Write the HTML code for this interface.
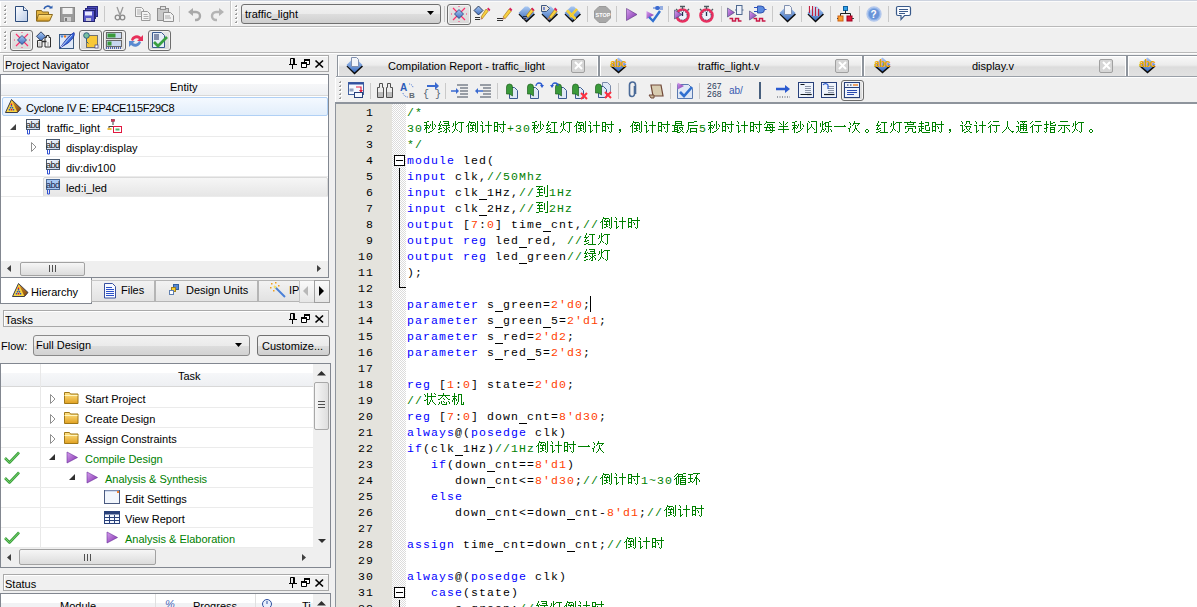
<!DOCTYPE html>
<html><head><meta charset="utf-8">
<style>
*{margin:0;padding:0;box-sizing:border-box}
html,body{width:1197px;height:607px;overflow:hidden;background:#f0f0f0;font-family:"Liberation Sans",sans-serif;font-size:11px;color:#000}
#root{position:relative;width:1197px;height:607px;overflow:hidden}
.a{position:absolute}
svg.a{overflow:visible}
.t{position:absolute;white-space:nowrap;line-height:13px}
.hdr{position:absolute;border:1px solid #a9a9a9;background:#f0f0f0;height:17px;box-shadow:inset 1px 1px 0 #fff}
.hdr span{position:absolute;left:1px;top:3px;line-height:13px}
.frame{position:absolute;border:1px solid #828790;background:#fff}
.sep{position:absolute;width:2px;border-left:1px solid #c8c8c8;border-right:1px solid #fff}
.grip{position:absolute;width:3px;background:radial-gradient(circle at 1px 1px,#9a9a9a 0.9px,transparent 1px);background-size:3px 4px}
.pb{position:absolute;border:1px solid #6d6d6d;border-radius:3px;background:linear-gradient(#e6e6e6,#d9d9d9);box-shadow:inset 0 0 0 1px #f4f4f4}
.row{position:absolute;height:20px;border-bottom:1px solid #ebebeb}
.ed b{position:absolute;font-weight:normal;font-family:"Liberation Mono",monospace;font-size:11.5px;letter-spacing:1.1px;line-height:16px;height:16px;white-space:pre;margin-top:0.5px}
.ed svg{position:absolute;width:14px;height:16px;fill:currentColor}
.ed i{position:absolute;left:336px;width:38px;text-align:right;font-style:normal;font-family:"Liberation Mono",monospace;font-size:11.5px;letter-spacing:1.1px;line-height:16px;height:16px;margin-top:0.5px}
.ed s{position:absolute;width:8px;height:1px;margin-top:15px;background:currentColor;text-decoration:none}
.k{color:#0000ff}.n{color:#ff4000}.c{color:#008000}.p{color:#000}
.tab{position:absolute;top:55px;height:21px;border-top:1px solid #8e949c;background:linear-gradient(#f8f8f8 0,#ececec 45%,#dcdcdc 55%,#e2e2e2 100%);box-shadow:inset 1px 1px 0 #fff,inset -1px 0 0 #fff}
.tab .x{position:absolute;top:3px;width:14px;height:14px;border:1px solid #a0a0a0;border-radius:2px;background:#d6d6d6}
.hs{position:absolute;height:16px;background:#efefef}
.thumb{position:absolute;top:1px;height:14px;border:1px solid #a2a2a2;border-radius:2px;background:linear-gradient(#f6f6f6,#dcdcdc)}
.gr{color:#008000}
</style></head><body><div id="root">
<svg width="0" height="0" style="position:absolute"><defs>
<linearGradient id="gdoc" x1="0" y1="0" x2="1" y2="1"><stop offset="0" stop-color="#ffffff"/><stop offset="1" stop-color="#b9cbe8"/></linearGradient>
<linearGradient id="gfold" x1="0" y1="0" x2="0" y2="1"><stop offset="0" stop-color="#ffe48a"/><stop offset="1" stop-color="#e0a020"/></linearGradient>
<linearGradient id="gdia" x1="0" y1="0" x2="0" y2="1"><stop offset="0" stop-color="#a9c8f2"/><stop offset="1" stop-color="#3f6fc0"/></linearGradient>
<linearGradient id="gpur" x1="0" y1="0" x2="1" y2="1"><stop offset="0" stop-color="#d9a0f0"/><stop offset="1" stop-color="#7a2ca8"/></linearGradient>
<linearGradient id="gbtn" x1="0" y1="0" x2="0" y2="1"><stop offset="0" stop-color="#f7f7f7"/><stop offset="1" stop-color="#d8d8d8"/></linearGradient>
<g id="i-xdia"><g stroke="#ff3070" stroke-width="1.2" fill="none"><path d="M2 2L7 7M14 2L9 7M2 14L7 9M14 14L9 9"/></g><g fill="#ff3070"><rect x="7.5" y="0" width="1" height="1"/><rect x="7.5" y="15" width="1" height="1"/><rect x="0" y="7.5" width="1" height="1"/><rect x="15" y="7.5" width="1" height="1"/></g><path d="M8 3.5L12.5 8L8 12.5L3.5 8Z" fill="url(#gdia)" stroke="#1e3c78" stroke-width="0.8"/></g>
<g id="i-bino"><path d="M3 1h3v4h1v9H1V5h2zM10 1h3v4h2v9H9V5h1z" fill="#e8e8e8" stroke="#404040" stroke-width="1"/><rect x="1.5" y="9" width="5" height="4.5" fill="#bdbdbd"/><rect x="9.5" y="9" width="5" height="4.5" fill="#bdbdbd"/></g>
<g id="i-abc"><path d="M8.5 2.5L16.5 9.5L8.5 16.5L0.5 9.5Z" fill="#0a0a0a"/><path d="M8.5 0.5L16.5 7.5L8.5 14.5L0.5 7.5Z" fill="url(#gdia)"/><text x="0.3" y="10" font-family="Liberation Sans" font-size="10" font-weight="bold" fill="#f5a800" letter-spacing="-0.45">abc</text></g>
<linearGradient id="gabd" x1="0" y1="0" x2="1" y2="1"><stop offset="0" stop-color="#ffffff"/><stop offset="1" stop-color="#c4d4f0"/></linearGradient><g id="i-abd"><rect x="0.5" y="0.5" width="13" height="10" fill="url(#gabd)" stroke="#4a5a70"/><text x="0" y="9" font-family="Liberation Sans" font-size="9" fill="#1a1a1a" letter-spacing="-0.5">abd</text><path d="M1.5 11v4h2v-4" fill="none" stroke="#3050d0"/></g>
<g id="i-close"><path d="M1 1L8 8M8 1L1 8" stroke="#000" stroke-width="1.6"/></g>
<g id="i-pin"><path d="M2 0.5h5M2.5 0.5v5.5h4V0.5M1 6.5h7M4.5 7v4" fill="none" stroke="#000" stroke-width="1"/></g>
<g id="i-rest"><path d="M3.5 0.5h6v5h-6zM0.5 3.5h6v5h-6z" fill="#fff" stroke="#000" stroke-width="1"/><path d="M3.5 1.5h6M0.5 4.5h6" stroke="#000" stroke-width="1.2"/></g>
<g id="i-fold"><path d="M0.5 2.5h5l1 1.5h7.5v9.5H0.5z" fill="url(#gfold)" stroke="#a07818"/><path d="M0.5 5.5h13" stroke="#fff6c0"/></g>
<g id="i-play"><path d="M1 1L11.5 6.5L1 12Z" fill="url(#gpur)" stroke="#6a2c9a" stroke-width="0.6"/></g>
<g id="i-chk"><path d="M1 8L5.5 12.5L15 2.5" fill="none" stroke="#3aa040" stroke-width="2.6" stroke-linejoin="round"/><path d="M1 8L5.5 12.5L15 2.5" fill="none" stroke="#7ed36a" stroke-width="1"/></g>
</defs></svg>

<!-- toolbar rows backgrounds -->
<div class="a" style="left:0;top:0;width:1197px;height:1px;background:#cdd3df"></div>
<div class="a" style="left:0;top:1px;width:1197px;height:1px;background:#fbfbfb"></div>
<div class="a" style="left:0;top:26px;width:1197px;height:1px;background:#b9b9b9"></div>
<div class="a" style="left:0;top:27px;width:1197px;height:1px;background:#fdfdfd"></div>
<div class="a" style="left:0;top:52px;width:1197px;height:1px;background:#b9b9b9"></div>
<div class="a" style="left:0;top:53px;width:1197px;height:1px;background:#fdfdfd"></div>
<div class="a" style="left:0;top:1px;width:1px;height:25px;background:#fff"></div>
<div class="a" style="left:0;top:28px;width:1px;height:24px;background:#fff"></div>

<!-- row 1 -->
<svg class="a" style="left:4px;top:5px" width="3" height="20" shape-rendering="crispEdges"><rect x="1" y="0" width="1" height="1" fill="#a6a6a6"/><rect x="0" y="1" width="2" height="1" fill="#9a9a9a"/><rect x="2" y="1" width="1" height="2" fill="#fff"/><rect x="0" y="2" width="2" height="1" fill="#fff"/><rect x="1" y="4" width="1" height="1" fill="#a6a6a6"/><rect x="0" y="5" width="2" height="1" fill="#9a9a9a"/><rect x="2" y="5" width="1" height="2" fill="#fff"/><rect x="0" y="6" width="2" height="1" fill="#fff"/><rect x="1" y="8" width="1" height="1" fill="#a6a6a6"/><rect x="0" y="9" width="2" height="1" fill="#9a9a9a"/><rect x="2" y="9" width="1" height="2" fill="#fff"/><rect x="0" y="10" width="2" height="1" fill="#fff"/><rect x="1" y="12" width="1" height="1" fill="#a6a6a6"/><rect x="0" y="13" width="2" height="1" fill="#9a9a9a"/><rect x="2" y="13" width="1" height="2" fill="#fff"/><rect x="0" y="14" width="2" height="1" fill="#fff"/><rect x="1" y="16" width="1" height="1" fill="#a6a6a6"/><rect x="0" y="17" width="2" height="1" fill="#9a9a9a"/><rect x="2" y="17" width="1" height="2" fill="#fff"/><rect x="0" y="18" width="2" height="1" fill="#fff"/></svg>
<svg class="a" style="left:15px;top:6px" width="13" height="16"><path d="M0.5 0.5h8l4 4v11h-12z" fill="url(#gdoc)" stroke="#2b4a7a"/><path d="M8.5 0.5v4h4" fill="#e8eef8" stroke="#2b4a7a"/></svg>
<svg class="a" style="left:36px;top:5px" width="17" height="17"><path d="M0.5 5.5h5l1 1.5h6v9h-12z" fill="#e3b440" stroke="#8a6a20"/><path d="M2.5 9.5h14l-3 6.5h-13z" fill="url(#gfold)" stroke="#8a6a20"/><path d="M8 4C9 1 13 0 15 3" fill="none" stroke="#2f5fb0" stroke-width="1.6"/><path d="M13 3.5h3.5v-3z" fill="#2f5fb0"/></svg>
<svg class="a" style="left:60px;top:7px" width="15" height="15"><rect x="0.5" y="0.5" width="14" height="14" fill="#9a9a9a" stroke="#8a8a8a"/><rect x="2.5" y="1" width="10" height="6" fill="#f2f2f2"/><rect x="4" y="10" width="7" height="4.5" fill="#d0d0d0"/><rect x="5" y="11" width="2" height="3" fill="#7a7a7a"/></svg>
<svg class="a" style="left:83px;top:6px" width="15" height="16"><rect x="4.5" y="0.5" width="10" height="10" fill="#4a4ab8" stroke="#2a2a80"/><rect x="2.5" y="2.5" width="10" height="10" fill="#5050c0" stroke="#2a2a80"/><rect x="0.5" y="4.5" width="11" height="11" fill="#5656c8" stroke="#24246e"/><rect x="2" y="5.5" width="7" height="4" fill="#e8e8ff"/><rect x="3" y="12" width="5" height="3" fill="#c8c8d8"/></svg>
<div class="a" style="left:104px;top:6px;width:1px;height:16px;background:#c9c9c9"></div>
<svg class="a" style="left:114px;top:6px" width="12" height="15"><path d="M3 1L6 9M9 1L6 9" stroke="#9a9a9a" stroke-width="1.3"/><circle cx="3.5" cy="11.5" r="2.3" fill="none" stroke="#8a8a8a" stroke-width="1.3"/><circle cx="8.5" cy="11.5" r="2.3" fill="none" stroke="#8a8a8a" stroke-width="1.3"/></svg>
<svg class="a" style="left:135px;top:7px" width="16" height="14"><path d="M0.5 0.5h6l2 2v7h-8z" fill="#f4f4f4" stroke="#9a9a9a"/><path d="M6.5 4.5h6l2.5 2.5v6.5h-8.5z" fill="#f4f4f4" stroke="#9a9a9a"/><path d="M8.5 7.5h4M8.5 9.5h5M8.5 11.5h5M2 3h4M2 5h4M2 7h4" stroke="#b0b0b0"/></svg>
<svg class="a" style="left:157px;top:6px" width="17" height="16"><rect x="0.5" y="2.5" width="11" height="12" fill="#c8c8c8" stroke="#909090"/><rect x="3.5" y="0.5" width="5" height="3" fill="#e0e0e0" stroke="#909090"/><path d="M6.5 6.5h7l3 3v6h-10z" fill="#f2f2f2" stroke="#909090"/><path d="M8 10h5M8 12h6" stroke="#a8a8a8"/></svg>
<div class="a" style="left:179px;top:6px;width:1px;height:16px;background:#c9c9c9"></div>
<svg class="a" style="left:188px;top:8px" width="13" height="13"><path d="M3 4h5a4 4 0 0 1 0 8h-1" fill="none" stroke="#a9a9a9" stroke-width="2.4"/><path d="M0 4L5 0v8z" fill="#a9a9a9"/></svg>
<svg class="a" style="left:211px;top:8px" width="13" height="13"><path d="M10 4H5a4 4 0 0 0 0 8h1" fill="none" stroke="#b4b4b4" stroke-width="2.4"/><path d="M13 4L8 0v8z" fill="#b4b4b4"/></svg>
<div class="a" style="left:230px;top:1px;width:1px;height:25px;background:#c8c8c8"></div>
<div class="a" style="left:231px;top:1px;width:1px;height:25px;background:#fff"></div>
<svg class="a" style="left:235px;top:5px" width="3" height="20" shape-rendering="crispEdges"><rect x="1" y="0" width="1" height="1" fill="#a6a6a6"/><rect x="0" y="1" width="2" height="1" fill="#9a9a9a"/><rect x="2" y="1" width="1" height="2" fill="#fff"/><rect x="0" y="2" width="2" height="1" fill="#fff"/><rect x="1" y="4" width="1" height="1" fill="#a6a6a6"/><rect x="0" y="5" width="2" height="1" fill="#9a9a9a"/><rect x="2" y="5" width="1" height="2" fill="#fff"/><rect x="0" y="6" width="2" height="1" fill="#fff"/><rect x="1" y="8" width="1" height="1" fill="#a6a6a6"/><rect x="0" y="9" width="2" height="1" fill="#9a9a9a"/><rect x="2" y="9" width="1" height="2" fill="#fff"/><rect x="0" y="10" width="2" height="1" fill="#fff"/><rect x="1" y="12" width="1" height="1" fill="#a6a6a6"/><rect x="0" y="13" width="2" height="1" fill="#9a9a9a"/><rect x="2" y="13" width="1" height="2" fill="#fff"/><rect x="0" y="14" width="2" height="1" fill="#fff"/><rect x="1" y="16" width="1" height="1" fill="#a6a6a6"/><rect x="0" y="17" width="2" height="1" fill="#9a9a9a"/><rect x="2" y="17" width="1" height="2" fill="#fff"/><rect x="0" y="18" width="2" height="1" fill="#fff"/></svg>
<div class="a" style="left:241px;top:4px;width:200px;height:20px;border:1px solid #707070;border-radius:3px;background:linear-gradient(#f2f2f2 0,#ebebeb 50%,#dddddd 51%,#cfcfcf 100%)"></div>
<div class="t" style="left:245px;top:8px">traffic_light</div>
<svg class="a" style="left:427px;top:11px" width="8" height="5"><path d="M0 0h7L3.5 4z" fill="#000"/></svg>
<div class="a" style="left:444px;top:6px;width:1px;height:16px;background:#c9c9c9"></div>
<div class="pb" style="left:447px;top:4px;width:24px;height:21px"></div>
<svg class="a" style="left:451px;top:6px" width="16" height="16"><use href="#i-xdia"/></svg>
<svg class="a" style="left:473px;top:5px" width="18" height="18"><path d="M5.5 1L10 5.5L5.5 10L1 5.5Z" fill="url(#gdia)" stroke="#102040" stroke-width="0.8"/><path d="M2 12.5h5M2 14.5h5" stroke="#303030" stroke-width="1"/><path d="M8 12L13 4l2.2 2.2-6 7.5z" fill="#f8d040" stroke="#a07010" stroke-width="0.6"/><path d="M14 4l1.2-1.5 2.2 2.2-1.2 1.5z" fill="#d8205a"/><path d="M8 12l2.2 1.7-2.7 1z" fill="#c08060"/></svg>
<svg class="a" style="left:496px;top:5px" width="18" height="18"><path d="M1 13.5h6M1 15.5h6" stroke="#303030" stroke-width="1"/><path d="M7 12L13 4l2.2 2.2-6 7.5z" fill="#f8d040" stroke="#a07010" stroke-width="0.6"/><path d="M13 4l1.2-1.5 2.2 2.2-1.2 1.5z" fill="#d8205a"/><path d="M7 12l2.2 1.7-2.7 1z" fill="#c08060"/></svg>
<svg class="a" style="left:518px;top:5px" width="18" height="18"><path d="M0.5 9.5L7 3h3l7 6.5L8.5 17.5Z" fill="#0a0a0a"/><path d="M0.5 8L7 1.5h3L16.5 8L8.5 15.5Z" fill="url(#gdia)"/><path d="M7 12L13 4l2.2 2.2-6 7.5z" fill="#f8d040" stroke="#a07010" stroke-width="0.6" transform="translate(1,-1)"/><path d="M13 4l1.2-1.5 2.2 2.2-1.2 1.5z" fill="#d8205a"/><path d="M7 12l2.2 1.7-2.7 1z" fill="#c08060"/><path d="M5 11.5h4M4 13.5h4" stroke="#203050"/></svg>
<svg class="a" style="left:541px;top:5px" width="18" height="18"><path d="M0.5 9.5L7 3h3l7 6.5L8.5 17.5Z" fill="#0a0a0a"/><path d="M0.5 8L7 1.5h3L16.5 8L8.5 15.5Z" fill="url(#gdia)"/><path d="M0.5 0.5h5l3 3-3 3h-5z" fill="#e8e4dc" stroke="#405880"/><path d="M3 2v3" stroke="#3050c0" stroke-width="1.2"/><path d="M7 12L13 4l2.2 2.2-6 7.5z" fill="#f8d040" stroke="#a07010" stroke-width="0.6" transform="translate(1,0)"/><path d="M13 4l1.2-1.5 2.2 2.2-1.2 1.5z" fill="#d8205a"/><path d="M7 12l2.2 1.7-2.7 1z" fill="#c08060"/></svg>
<svg class="a" style="left:564px;top:5px" width="18" height="18"><path d="M0.5 9.5L7 3h3l7 6.5L8.5 17.5Z" fill="#0a0a0a"/><path d="M0.5 8L7 1.5h3L16.5 8L8.5 15.5Z" fill="url(#gdia)"/><path d="M3 5.5L11.5 14M6 12L13 4" stroke="#f8d838" stroke-width="2.6"/><path d="M3 5.5L11.5 14M6 12L13 4" stroke="#e09020" stroke-width="0.6" stroke-dasharray="1 1"/></svg>
<div class="a" style="left:587px;top:6px;width:1px;height:16px;background:#c9c9c9"></div>
<svg class="a" style="left:594px;top:6px" width="17" height="17"><path d="M5 0.5h7l4.5 4.5v7L12 16.5H5L0.5 12V5z" fill="#a8a8a8" stroke="#9a9a9a"/><text x="1.5" y="11" font-family="Liberation Sans" font-size="5.5" font-weight="bold" fill="#fff">STOP</text></svg>
<div class="a" style="left:616px;top:6px;width:1px;height:16px;background:#c9c9c9"></div>
<svg class="a" style="left:626px;top:8px" width="12" height="14"><path d="M0.5 0.5L11 6.5L0.5 12.5Z" fill="url(#gpur)" stroke="#5a3080" stroke-width="0.6"/></svg>
<svg class="a" style="left:646px;top:5px" width="18" height="18"><path d="M0.5 6L8 10L0.5 14Z" fill="url(#gpur)"/><path d="M3 12L7 16L14 6" fill="none" stroke="#3070d0" stroke-width="2.4"/><rect x="9" y="1" width="5" height="4" rx="2" fill="#3a6ad0"/><path d="M14 2h3M14 4h3M7 3h2" stroke="#3a6ad0"/></svg>
<div class="a" style="left:668px;top:6px;width:1px;height:16px;background:#c9c9c9"></div>
<svg class="a" style="left:674px;top:5px" width="18" height="18"><circle cx="8.5" cy="10.5" r="6" fill="#eef2fc" stroke="#e83060" stroke-width="2.6"/><circle cx="8.5" cy="10.5" r="4.5" fill="none" stroke="#203050" stroke-width="1" stroke-dasharray="0.9 1.45"/><path d="M6 1.5h5M8.5 1.5v2.5M2 4l1.5 1.5M15 4l-1.5 1.5" stroke="#505a60" stroke-width="1.3"/><path d="M8.5 7v4" stroke="#203050" stroke-width="1.3"/><path d="M0.5 5L8 9.5L0.5 14Z" fill="url(#gpur)" stroke="#404a70" stroke-width="0.6"/></svg>
<svg class="a" style="left:698px;top:5px" width="18" height="18"><circle cx="8.5" cy="10.5" r="6" fill="#eef2fc" stroke="#e83060" stroke-width="2.6"/><circle cx="8.5" cy="10.5" r="4.5" fill="none" stroke="#203050" stroke-width="1" stroke-dasharray="0.9 1.45"/><path d="M6 1.5h5M8.5 1.5v2.5M2 4l1.5 1.5M15 4l-1.5 1.5" stroke="#505a60" stroke-width="1.3"/><path d="M8.5 7v4" stroke="#203050" stroke-width="1.3"/></svg>
<div class="a" style="left:721px;top:6px;width:1px;height:16px;background:#c9c9c9"></div>
<svg class="a" style="left:727px;top:5px" width="17" height="18"><path d="M0.5 3L7.5 7.5L0.5 12Z" fill="url(#gpur)" stroke="#404a70" stroke-width="0.6"/><rect x="9.5" y="0.5" width="5.5" height="9" fill="#eef2fa" stroke="#506a90"/><path d="M8 5h1.5M15 5h1.5" stroke="#506a90"/><path d="M2.5 13.5h3v2.5h3v-2.5h3v2.5h3" fill="none" stroke="#c81848" stroke-width="1.5"/></svg>
<svg class="a" style="left:749px;top:5px" width="18" height="18"><path d="M0.5 6L7.5 10.5L0.5 15Z" fill="url(#gpur)" stroke="#404a70" stroke-width="0.6"/><path d="M8.5 1h3.5a3.5 3.5 0 0 1 0 7h-3.5z" fill="#5a8ae0" stroke="#2040a0" stroke-width="0.8"/><path d="M5 2.5h3.5M5 6.5h3.5M15.5 4.5h2" stroke="#2a50c0" stroke-width="1"/><path d="M4.5 13.5h3v2.5h3v-2.5h3v2.5h3" fill="none" stroke="#c81848" stroke-width="1.5"/></svg>
<div class="a" style="left:772px;top:6px;width:1px;height:16px;background:#c9c9c9"></div>
<svg class="a" style="left:779px;top:5px" width="18" height="18"><path d="M0.5 9.5L7 3h3l7 6.5L8.5 17.5Z" fill="#0a0a0a"/><path d="M0.5 8L7 1.5h3L16.5 8L8.5 15.5Z" fill="url(#gdia)"/><path d="M5.5 0.5h5l2 2v7h-7z" fill="#f4f6fa" stroke="#8090b0"/></svg>
<div class="a" style="left:801px;top:6px;width:1px;height:16px;background:#c9c9c9"></div>
<svg class="a" style="left:807px;top:5px" width="18" height="18"><path d="M0.5 9.5L7 3h3l7 6.5L8.5 17.5Z" fill="#0a0a0a"/><path d="M0.5 8L7 1.5h3L16.5 8L8.5 15.5Z" fill="url(#gdia)"/><path d="M2.5 1v7M5.5 1v10M8.5 2v9M11.5 4v7" stroke="#c02040" stroke-width="1.2"/><path d="M4 1v9M7 2v9M10 3v8" stroke="#ffffff" stroke-width="0.9"/></svg>
<div class="a" style="left:830px;top:6px;width:1px;height:16px;background:#c9c9c9"></div>
<svg class="a" style="left:837px;top:6px" width="17" height="16"><rect x="6.5" y="0.5" width="4" height="4" fill="#30a0e8" stroke="#1060a0"/><path d="M8.5 4.5v3M3.5 11V7.5h10V11" fill="none" stroke="#202020"/><rect x="1" y="10" width="5" height="5" fill="#f8a030" stroke="#d06010"/><rect x="10" y="10" width="5" height="5" fill="#e01838" stroke="#a00020"/><path d="M0 12.5h1M15 12.5h2" stroke="#404040"/></svg>
<div class="a" style="left:859px;top:6px;width:1px;height:16px;background:#c9c9c9"></div>
<svg class="a" style="left:866px;top:6px" width="16" height="16"><circle cx="8" cy="8" r="7" fill="#8ab0e8" stroke="#b4c8ec" stroke-width="1.4"/><circle cx="8" cy="8" r="5.2" fill="#6a94d8"/><text x="4.6" y="12" font-family="Liberation Sans" font-size="10" font-weight="bold" fill="#fff">?</text></svg>
<div class="a" style="left:888px;top:6px;width:1px;height:16px;background:#c9c9c9"></div>
<svg class="a" style="left:896px;top:6px" width="15" height="15"><path d="M2 0.5h11a1.5 1.5 0 0 1 1.5 1.5v6a1.5 1.5 0 0 1-1.5 1.5H8.5l-3.5 4v-4H2A1.5 1.5 0 0 1 0.5 8V2A1.5 1.5 0 0 1 2 0.5z" fill="#fafcff" stroke="#3a5a8a" stroke-width="1.2"/><path d="M3 3.5h9M3 5.5h9M3 7.5h6" stroke="#3a5a8a"/></svg>

<!-- row 2 -->
<svg class="a" style="left:4px;top:31px" width="3" height="20" shape-rendering="crispEdges"><rect x="1" y="0" width="1" height="1" fill="#a6a6a6"/><rect x="0" y="1" width="2" height="1" fill="#9a9a9a"/><rect x="2" y="1" width="1" height="2" fill="#fff"/><rect x="0" y="2" width="2" height="1" fill="#fff"/><rect x="1" y="4" width="1" height="1" fill="#a6a6a6"/><rect x="0" y="5" width="2" height="1" fill="#9a9a9a"/><rect x="2" y="5" width="1" height="2" fill="#fff"/><rect x="0" y="6" width="2" height="1" fill="#fff"/><rect x="1" y="8" width="1" height="1" fill="#a6a6a6"/><rect x="0" y="9" width="2" height="1" fill="#9a9a9a"/><rect x="2" y="9" width="1" height="2" fill="#fff"/><rect x="0" y="10" width="2" height="1" fill="#fff"/><rect x="1" y="12" width="1" height="1" fill="#a6a6a6"/><rect x="0" y="13" width="2" height="1" fill="#9a9a9a"/><rect x="2" y="13" width="1" height="2" fill="#fff"/><rect x="0" y="14" width="2" height="1" fill="#fff"/><rect x="1" y="16" width="1" height="1" fill="#a6a6a6"/><rect x="0" y="17" width="2" height="1" fill="#9a9a9a"/><rect x="2" y="17" width="1" height="2" fill="#fff"/><rect x="0" y="18" width="2" height="1" fill="#fff"/></svg>
<div class="pb" style="left:10px;top:30px;width:23px;height:21px"></div>
<svg class="a" style="left:14px;top:32px" width="16" height="16"><use href="#i-xdia"/></svg>
<svg class="a" style="left:35px;top:31px" width="18" height="18"><path d="M6 0.8L10.5 5.3L6 9.8L1.5 5.3Z" fill="url(#gdia)" stroke="#102040" stroke-width="0.8"/><path d="M11.5 4.5h2.5v2h1.5v9.5h-5.5V6.5h1.5z" fill="#f4f4f4" stroke="#303030"/><path d="M2.5 9.5h4.5v6.5H2.5z" fill="#f4f4f4" stroke="#303030"/><rect x="3.5" y="11" width="2" height="4" fill="#c8c8c8"/><rect x="12" y="11" width="2" height="4" fill="#c8c8c8"/><path d="M7 10.5h4.5" stroke="#303030" stroke-width="1.5"/></svg>
<svg class="a" style="left:58px;top:31px" width="18" height="18"><rect x="1.5" y="3.5" width="14" height="14" fill="#dfe8f8" stroke="#3a5a80"/><rect x="2" y="4" width="13" height="2" fill="#b8c8e4"/><rect x="3" y="4.5" width="2" height="2" fill="#4a88e0"/><rect x="6" y="4.5" width="2" height="2" fill="#f07010"/><path d="M2 17C5 13 9 6 16 1.5C17.5 4 14 9 10 12C7 14 4 15.5 2 17z" fill="#3a6ad8" stroke="#1a2a9a" stroke-width="0.8"/><path d="M3 16L14 4" stroke="#e8f0ff" stroke-width="0.8"/></svg>
<div class="pb" style="left:79px;top:30px;width:23px;height:21px"></div>
<svg class="a" style="left:83px;top:32px" width="16" height="17"><rect x="3.5" y="3.5" width="11" height="12" fill="#f8c838" stroke="#707070"/><circle cx="3.5" cy="3.5" r="2.8" fill="#78c0a0" stroke="#306080"/><path d="M3.5 6.5v3l2 2" fill="none" stroke="#306080"/><rect x="12" y="13" width="3" height="3" fill="#fff" stroke="#404080" stroke-width="0.7"/></svg>
<div class="pb" style="left:103px;top:30px;width:23px;height:21px"></div>
<svg class="a" style="left:106px;top:32px" width="17" height="17"><rect x="0.5" y="0.5" width="15" height="6" fill="#c8d8f0" stroke="#6a6a6a"/><rect x="1.5" y="1.5" width="8" height="4" fill="#3a9a3a"/><rect x="0.5" y="8.5" width="15" height="6" fill="#c8d8f0" stroke="#6a6a6a"/><rect x="1.5" y="9.5" width="4" height="4" fill="#3a9a3a"/><path d="M0 16h16" stroke="#2040a0" stroke-width="1.5" stroke-dasharray="1 1"/></svg>
<svg class="a" style="left:128px;top:33px" width="16" height="16"><path d="M3 7A6 6 0 0 1 13 4L15 2v6H9l2-2A4 4 0 0 0 5 8z" fill="#e8305a"/><path d="M13 9A6 6 0 0 1 3 12L1 14V8h6L5 10a4 4 0 0 0 6-2z" fill="#5a8ad0"/></svg>
<div class="pb" style="left:148px;top:30px;width:23px;height:21px"></div>
<svg class="a" style="left:152px;top:32px" width="16" height="17"><path d="M0.5 0.5h9l3 3v12h-12z" fill="#e6eef8" stroke="#3a5a90"/><path d="M2 3h5M2 5h5M2 7h5" stroke="#203060"/><path d="M2 10L6 14L15 5" fill="none" stroke="#38a040" stroke-width="2.8"/></svg>
<!-- Project navigator -->
<div class="hdr" style="left:3px;top:55px;width:326px"><span>Project Navigator</span></div>
<svg class="a" style="left:289px;top:58px" width="8" height="11"><path d="M1.5 0.5h4v6h-4z" fill="#e8e8e8" stroke="#000"/><path d="M0 6.5h8M3.5 7v4" stroke="#000"/><path d="M4.5 1v5" stroke="#000"/></svg>
<svg class="a" style="left:301px;top:59px" width="9" height="9"><path d="M3.5 0.5h5v5h-5z" fill="#fff" stroke="#000"/><path d="M3 1h6" stroke="#000" stroke-width="2"/><path d="M0.5 3.5h5v5h-5z" fill="#fff" stroke="#000"/><path d="M0 4h6" stroke="#000" stroke-width="2"/></svg>
<svg class="a" style="left:315px;top:60px" width="9" height="8"><path d="M0.5 0.5L8 7.5M8 0.5L0.5 7.5" stroke="#000" stroke-width="1.7"/></svg>

<div class="frame" style="left:0;top:74px;width:329px;height:204px"></div>
<div class="a" style="left:1px;top:84px;width:327px;height:11px;background:linear-gradient(#f6f7f9,#eef0f3)"></div>
<div class="a" style="left:1px;top:95px;width:327px;height:1px;background:#d8d8d8"></div>
<div class="t" style="left:170px;top:81px">Entity</div>
<!-- rows -->
<div class="a" style="left:2px;top:97px;width:326px;height:19px;border:1px solid #b0d0f5;border-radius:2px;background:linear-gradient(#f4f9ff,#e2eefb)"></div>
<svg class="a" style="left:5px;top:99px" width="17" height="15"><defs><linearGradient id="gpyr" x1="0" y1="0" x2="1" y2="1"><stop offset="0" stop-color="#f8b030"/><stop offset="1" stop-color="#7a4010"/></linearGradient></defs><path d="M6.5 0.5L16 9.5L12.5 13.5H0.5Z" fill="url(#gpyr)"/><path d="M6.5 0.5L12.5 13.5H0.5Z" fill="#f8d440"/><path d="M6.5 0.5L16 9.5L12.5 13.5H0.5Z" fill="none" stroke="#28304a" stroke-width="0.9"/><g fill="#e01030"><rect x="5.8" y="4.5" width="1.4" height="1.5"/><rect x="5.8" y="10" width="1.4" height="1.5"/></g><g fill="#2050d0"><rect x="5.8" y="6" width="1.4" height="1.5"/><rect x="4.8" y="8" width="1.4" height="1.5"/><rect x="6.8" y="8" width="1.4" height="1.5"/><rect x="3.8" y="10" width="1.4" height="1.5"/><rect x="7.8" y="10" width="1.4" height="1.5"/></g></svg>
<div class="t" style="left:26px;top:102px;letter-spacing:-0.3px">Cyclone IV E: EP4CE115F29C8</div>
<div class="a" style="left:1px;top:136px;width:327px;height:1px;background:#ebebeb"></div>
<div class="a" style="left:1px;top:156px;width:327px;height:1px;background:#ebebeb"></div>
<div class="a" style="left:1px;top:176px;width:327px;height:1px;background:#ebebeb"></div>
<div class="a" style="left:43px;top:177px;width:285px;height:20px;border:1px solid #dadada;border-radius:2px;background:linear-gradient(#f6f6f6,#e6e6e6)"></div>
<div class="a" style="left:1px;top:196px;width:327px;height:1px;background:#ebebeb"></div>
<svg class="a" style="left:10px;top:124px" width="7" height="7"><path d="M6 0V6H0z" fill="#404040"/></svg>
<svg class="a" style="left:26px;top:119px" width="15" height="17"><use href="#i-abd"/></svg>
<div class="t" style="left:47px;top:122px">traffic_light</div>
<svg class="a" style="left:107px;top:119px" width="15" height="14"><rect x="4.5" y="0.5" width="3" height="2" fill="#e03050" stroke="#802040" stroke-width="0.6"/><path d="M6 3v3M2 7.5h8M2 7v3" fill="none" stroke="#404040"/><rect x="0.5" y="9" width="4" height="2" fill="#f0c040"/><rect x="6.5" y="7.5" width="8" height="6" fill="#fff" stroke="#e01840"/><rect x="8.5" y="9.5" width="4" height="2" fill="#58b070"/></svg>
<svg class="a" style="left:31px;top:142px" width="6" height="10"><path d="M0.5 0.5L5 5L0.5 9.5Z" fill="#fff" stroke="#909090"/></svg>
<svg class="a" style="left:46px;top:139px" width="15" height="17"><use href="#i-abd"/></svg>
<div class="t" style="left:66px;top:142px">display:display</div>
<svg class="a" style="left:46px;top:159px" width="15" height="17"><use href="#i-abd"/></svg>
<div class="t" style="left:66px;top:162px">div:div100</div>
<svg class="a" style="left:46px;top:179px" width="15" height="17"><rect x="0.5" y="0.5" width="13" height="10" fill="#a8c8f4" stroke="#4a6a98"/><text x="0" y="9" font-family="Liberation Sans" font-size="9" fill="#1a2a50" letter-spacing="-0.5">abd</text><path d="M1.5 11v4h2v-4" fill="none" stroke="#3050d0"/></svg>
<div class="t" style="left:66px;top:182px">led:i_led</div>

<!-- h scrollbar -->
<div class="hs" style="left:1px;top:261px;width:327px"></div>
<svg class="a" style="left:7px;top:265px" width="5" height="8"><path d="M4 0v7L0 3.5z" fill="#404040"/></svg>
<svg class="a" style="left:317px;top:265px" width="5" height="8"><path d="M0 0v7l4-3.5z" fill="#404040"/></svg>
<div class="thumb" style="left:20px;top:262px;width:65px"></div>
<svg class="a" style="left:49px;top:265px" width="7" height="7"><path d="M0.5 0v7M3.5 0v7M6.5 0v7" stroke="#505050"/></svg>

<!-- nav tabs -->
<div class="a" style="left:0;top:278px;width:92px;height:26px;background:#fff;border:1px solid #828790;border-top:none"></div>
<div class="a" style="left:91px;top:280px;width:64px;height:22px;border:1px solid #b4b4b4;border-top-color:#c8c8c8;background:linear-gradient(#f2f2f2,#e2e2e2)"></div>
<div class="a" style="left:155px;top:280px;width:103px;height:22px;border:1px solid #b4b4b4;background:linear-gradient(#f2f2f2,#e2e2e2)"></div>
<div class="a" style="left:258px;top:280px;width:50px;height:22px;border:1px solid #b4b4b4;background:linear-gradient(#f2f2f2,#e2e2e2)"></div>
<svg class="a" style="left:12px;top:283px" width="17" height="15"><defs><linearGradient id="gpyr2" x1="0" y1="0" x2="1" y2="1"><stop offset="0" stop-color="#f8b030"/><stop offset="1" stop-color="#7a4010"/></linearGradient></defs><path d="M6.5 0.5L16 9.5L12.5 13.5H0.5Z" fill="url(#gpyr2)"/><path d="M6.5 0.5L12.5 13.5H0.5Z" fill="#f8d440"/><path d="M6.5 0.5L16 9.5L12.5 13.5H0.5Z" fill="none" stroke="#28304a" stroke-width="0.9"/><g fill="#e01030"><rect x="5.8" y="4.5" width="1.4" height="1.5"/><rect x="5.8" y="10" width="1.4" height="1.5"/></g><g fill="#2050d0"><rect x="5.8" y="6" width="1.4" height="1.5"/><rect x="4.8" y="8" width="1.4" height="1.5"/><rect x="6.8" y="8" width="1.4" height="1.5"/><rect x="3.8" y="10" width="1.4" height="1.5"/><rect x="7.8" y="10" width="1.4" height="1.5"/></g></svg>
<div class="t" style="left:31px;top:286px">Hierarchy</div>
<svg class="a" style="left:104px;top:283px" width="12" height="16"><path d="M0.5 0.5h8l3 3v11.5h-11z" fill="#f8faff" stroke="#3850a0"/><path d="M2 4.5h6M2 6.5h8M2 8.5h8M2 10.5h8M2 12.5h8" stroke="#2a50c8"/></svg>
<div class="t" style="left:121px;top:284px">Files</div>
<svg class="a" style="left:169px;top:284px" width="11" height="11"><rect x="4.5" y="0.5" width="5" height="5" fill="#5a88d0" stroke="#3060a0"/><rect x="2.5" y="3.5" width="4" height="4" fill="#f8d030" stroke="#a08020"/><rect x="0.5" y="6.5" width="4" height="4" fill="#fff" stroke="#6080b0"/></svg>
<div class="t" style="left:186px;top:284px">Design Units</div>
<svg class="a" style="left:270px;top:282px" width="17" height="16"><path d="M5 5L15 15" stroke="#4a80d8" stroke-width="2"/><g fill="#f0a020"><rect x="1" y="1" width="1.5" height="1.5"/><rect x="5" y="0" width="1.5" height="1.5"/><rect x="0" y="5" width="1.5" height="1.5"/><rect x="8" y="3" width="1.5" height="1.5"/><rect x="3" y="8" width="1.5" height="1.5"/></g><path d="M4 4l2 2" stroke="#f8e060" stroke-width="2"/></svg>
<div class="t" style="left:289px;top:284px">IP</div>
<div class="a" style="left:299px;top:280px;width:16px;height:23px;border:1px solid #c4c4c4;background:linear-gradient(#fafafa,#e6e6e6)"></div>
<div class="a" style="left:314px;top:280px;width:16px;height:23px;border:1px solid #a0a0a0;background:linear-gradient(#fafafa,#e6e6e6)"></div>
<svg class="a" style="left:303px;top:286px" width="6" height="11"><path d="M5 0v10L0 5z" fill="#b8b8b8"/></svg>
<svg class="a" style="left:319px;top:286px" width="6" height="11"><path d="M0 0v10l5-5z" fill="#000"/></svg>

<!-- Tasks -->
<div class="hdr" style="left:3px;top:310px;width:326px"><span>Tasks</span></div>
<svg class="a" style="left:289px;top:313px" width="8" height="11"><path d="M1.5 0.5h4v6h-4z" fill="#e8e8e8" stroke="#000"/><path d="M0 6.5h8M3.5 7v4" stroke="#000"/><path d="M4.5 1v5" stroke="#000"/></svg>
<svg class="a" style="left:301px;top:314px" width="9" height="9"><path d="M3.5 0.5h5v5h-5z" fill="#fff" stroke="#000"/><path d="M3 1h6" stroke="#000" stroke-width="2"/><path d="M0.5 3.5h5v5h-5z" fill="#fff" stroke="#000"/><path d="M0 4h6" stroke="#000" stroke-width="2"/></svg>
<svg class="a" style="left:315px;top:315px" width="9" height="8"><path d="M0.5 0.5L8 7.5M8 0.5L0.5 7.5" stroke="#000" stroke-width="1.7"/></svg>
<div class="t" style="left:1px;top:340px">Flow:</div>
<div class="a" style="left:33px;top:335px;width:217px;height:21px;border:1px solid #8a8a8a;border-radius:3px;background:linear-gradient(#f2f2f2 0,#ebebeb 50%,#dddddd 51%,#d2d2d2 100%)"></div>
<div class="t" style="left:36px;top:339px">Full Design</div>
<svg class="a" style="left:235px;top:343px" width="8" height="5"><path d="M0 0h7L3.5 4z" fill="#000"/></svg>
<div class="a" style="left:257px;top:335px;width:73px;height:21px;border:1px solid #707070;border-radius:3px;background:linear-gradient(#f2f2f2 0,#ebebeb 50%,#dddddd 51%,#cfcfcf 100%)"></div>
<div class="t" style="left:262px;top:340px">Customize...</div>

<div class="frame" style="left:0;top:363px;width:331px;height:205px"></div>
<div class="a" style="left:1px;top:373px;width:312px;height:13px;background:linear-gradient(#f6f7f9,#eef0f3)"></div>
<div class="a" style="left:1px;top:386px;width:312px;height:1px;background:#d8d8d8"></div>
<div class="a" style="left:40px;top:364px;width:1px;height:184px;background:#e8e8e8"></div>
<div class="t" style="left:178px;top:370px">Task</div>
<div class="a" style="left:1px;top:407px;width:312px;height:1px;background:#ebebeb"></div>
<div class="a" style="left:1px;top:427px;width:312px;height:1px;background:#ebebeb"></div>
<div class="a" style="left:1px;top:447px;width:312px;height:1px;background:#ebebeb"></div>
<div class="a" style="left:1px;top:467px;width:312px;height:1px;background:#ebebeb"></div>
<div class="a" style="left:1px;top:487px;width:312px;height:1px;background:#ebebeb"></div>
<div class="a" style="left:1px;top:507px;width:312px;height:1px;background:#ebebeb"></div>
<div class="a" style="left:1px;top:527px;width:312px;height:1px;background:#ebebeb"></div>
<div class="a" style="left:1px;top:547px;width:312px;height:1px;background:#ebebeb"></div>
<!-- task rows -->
<svg class="a" style="left:50px;top:394px" width="6" height="10"><path d="M0.5 0.5L5 5L0.5 9.5Z" fill="#fff" stroke="#909090"/></svg>
<svg class="a" style="left:64px;top:390px" width="15" height="14"><use href="#i-fold"/></svg>
<div class="t" style="left:85px;top:393px">Start Project</div>
<svg class="a" style="left:50px;top:414px" width="6" height="10"><path d="M0.5 0.5L5 5L0.5 9.5Z" fill="#fff" stroke="#909090"/></svg>
<svg class="a" style="left:64px;top:410px" width="15" height="14"><use href="#i-fold"/></svg>
<div class="t" style="left:85px;top:413px">Create Design</div>
<svg class="a" style="left:50px;top:434px" width="6" height="10"><path d="M0.5 0.5L5 5L0.5 9.5Z" fill="#fff" stroke="#909090"/></svg>
<svg class="a" style="left:64px;top:430px" width="15" height="14"><use href="#i-fold"/></svg>
<div class="t" style="left:85px;top:433px">Assign Constraints</div>
<svg class="a" style="left:4px;top:450px" width="16" height="15"><use href="#i-chk"/></svg>
<svg class="a" style="left:49px;top:454px" width="7" height="7"><path d="M6 0V6H0z" fill="#303030"/></svg>
<svg class="a" style="left:66px;top:451px" width="14" height="14"><use href="#i-play"/></svg>
<div class="t gr" style="left:85px;top:453px">Compile Design</div>
<svg class="a" style="left:4px;top:470px" width="16" height="15"><use href="#i-chk"/></svg>
<svg class="a" style="left:69px;top:474px" width="7" height="7"><path d="M6 0V6H0z" fill="#303030"/></svg>
<svg class="a" style="left:86px;top:471px" width="14" height="14"><use href="#i-play"/></svg>
<div class="t gr" style="left:105px;top:473px">Analysis &amp; Synthesis</div>
<svg class="a" style="left:104px;top:490px" width="17" height="15"><rect x="0.5" y="0.5" width="15" height="13" fill="#f2f6fc" stroke="#4a5a80"/><path d="M1 1h14" stroke="#b0c0e0" stroke-width="1"/><rect x="13" y="1" width="2" height="2" fill="#f08030"/></svg>
<div class="t" style="left:125px;top:493px">Edit Settings</div>
<svg class="a" style="left:104px;top:511px" width="17" height="14"><rect x="0.5" y="0.5" width="15" height="12" fill="#f4f8ff" stroke="#28407a"/><rect x="0.5" y="0.5" width="15" height="3" fill="#28407a"/><path d="M1 6.5h15M1 9.5h15M5.5 4v9M10.5 4v9" stroke="#28407a"/></svg>
<div class="t" style="left:125px;top:513px">View Report</div>
<svg class="a" style="left:4px;top:530px" width="16" height="15"><use href="#i-chk"/></svg>
<svg class="a" style="left:106px;top:531px" width="14" height="14"><use href="#i-play"/></svg>
<div class="t gr" style="left:125px;top:533px">Analysis &amp; Elaboration</div>
<!-- v scroll -->
<div class="a" style="left:313px;top:364px;width:17px;height:184px;background:#efefef"></div>
<svg class="a" style="left:317px;top:371px" width="9" height="5"><path d="M0 4.5L4.5 0L9 4.5z" fill="#303030"/></svg>
<div class="a" style="left:314px;top:382px;width:15px;height:48px;border:1px solid #a8a8a8;border-radius:2px;background:linear-gradient(90deg,#f6f6f6,#dedede)"></div>
<svg class="a" style="left:318px;top:401px" width="7" height="7"><path d="M0 0.5h7M0 3.5h7M0 6.5h7" stroke="#505050"/></svg>
<svg class="a" style="left:318px;top:539px" width="8" height="4"><path d="M0 0h8L4 4z" fill="#303030"/></svg>
<!-- h scroll -->
<div class="hs" style="left:1px;top:548px;width:312px;height:19px"></div>
<div class="a" style="left:313px;top:548px;width:17px;height:19px;background:#efefef"></div>
<svg class="a" style="left:7px;top:554px" width="5" height="8"><path d="M4 0v7L0 3.5z" fill="#404040"/></svg>
<svg class="a" style="left:302px;top:554px" width="5" height="8"><path d="M0 0v7l4-3.5z" fill="#404040"/></svg>
<div class="thumb" style="left:19px;top:549px;width:137px;height:16px"></div>
<svg class="a" style="left:84px;top:554px" width="7" height="7"><path d="M0.5 0v7M3.5 0v7M6.5 0v7" stroke="#505050"/></svg>

<!-- Status -->
<div class="hdr" style="left:3px;top:574px;width:326px"><span>Status</span></div>
<svg class="a" style="left:289px;top:577px" width="8" height="11"><path d="M1.5 0.5h4v6h-4z" fill="#e8e8e8" stroke="#000"/><path d="M0 6.5h8M3.5 7v4" stroke="#000"/><path d="M4.5 1v5" stroke="#000"/></svg>
<svg class="a" style="left:301px;top:578px" width="9" height="9"><path d="M3.5 0.5h5v5h-5z" fill="#fff" stroke="#000"/><path d="M3 1h6" stroke="#000" stroke-width="2"/><path d="M0.5 3.5h5v5h-5z" fill="#fff" stroke="#000"/><path d="M0 4h6" stroke="#000" stroke-width="2"/></svg>
<svg class="a" style="left:315px;top:579px" width="9" height="8"><path d="M0.5 0.5L8 7.5M8 0.5L0.5 7.5" stroke="#000" stroke-width="1.7"/></svg>
<div class="frame" style="left:0;top:593px;width:331px;height:20px"></div>
<div class="a" style="left:1px;top:603px;width:312px;height:4px;background:#f1f2f4"></div>
<div class="a" style="left:155px;top:594px;width:1px;height:13px;background:#e0e0e0"></div>
<div class="a" style="left:255px;top:594px;width:1px;height:13px;background:#e0e0e0"></div>
<div class="t" style="left:60px;top:600px">Module</div>
<div class="t" style="left:165px;top:598px;color:#4a68b8;font-style:italic">%</div>
<div class="t" style="left:193px;top:600px">Progress</div>
<svg class="a" style="left:262px;top:599px" width="10" height="10"><circle cx="5" cy="5" r="4.5" fill="#e8f0fc" stroke="#3050a0"/><path d="M5 2v3" stroke="#3050a0"/></svg>
<div class="t" style="left:302px;top:600px">Ti</div>
<div class="a" style="left:313px;top:594px;width:17px;height:13px;background:#efefef"></div>
<svg class="a" style="left:317px;top:601px" width="9" height="5"><path d="M0 4.5L4.5 0L9 4.5z" fill="#303030"/></svg>
<div class="a" style="left:331px;top:55px;width:4px;height:552px;background:#f0f0f0"></div>
<!-- right: tabs -->
<div class="a" style="left:336px;top:55px;width:861px;height:22px;background:#f0f0f0"></div>
<div class="tab" style="left:337px;width:261px;border-left:1px solid #8e949c"><div class="x" style="left:233px"></div></div>
<div class="tab" style="left:598px;width:264px;border-left:2px solid #8e949c"><div class="x" style="left:235px"></div></div>
<div class="tab" style="left:862px;width:264px;border-left:2px solid #8e949c"><div class="x" style="left:235px"></div></div>
<div class="tab" style="left:1126px;width:73px;border-left:2px solid #8e949c"></div>
<svg class="a" style="left:574px;top:61px" width="9" height="9"><path d="M1 1L8 8M8 1L1 8" stroke="#fff" stroke-width="2"/></svg>
<svg class="a" style="left:838px;top:61px" width="9" height="9"><path d="M1 1L8 8M8 1L1 8" stroke="#fff" stroke-width="2"/></svg>
<svg class="a" style="left:1102px;top:61px" width="9" height="9"><path d="M1 1L8 8M8 1L1 8" stroke="#fff" stroke-width="2"/></svg>
<svg class="a" style="left:346px;top:57px" width="18" height="18"><path d="M0.5 9.5L7 3h3l7 6.5L8.5 17.5Z" fill="#0a0a0a"/><path d="M0.5 8L7 1.5h3L16.5 8L8.5 15.5Z" fill="url(#gdia)"/><path d="M5.5 0.5h5l2 2v7h-7z" fill="#f4f6fa" stroke="#8090b0"/></svg>
<div class="t" style="left:388px;top:60px">Compilation Report - traffic_light</div>
<svg class="a" style="left:610px;top:57px" width="17" height="17"><use href="#i-abc"/></svg>
<div class="t" style="left:698px;top:60px">traffic_light.v</div>
<svg class="a" style="left:874px;top:57px" width="17" height="17"><use href="#i-abc"/></svg>
<div class="t" style="left:972px;top:60px">display.v</div>
<svg class="a" style="left:1139px;top:57px" width="17" height="17"><use href="#i-abc"/></svg>
<div class="a" style="left:336px;top:76px;width:861px;height:1px;background:#9aa0a8"></div>
<div class="a" style="left:336px;top:77px;width:861px;height:1px;background:#ffffff"></div>

<!-- editor toolbar -->
<div class="a" style="left:335px;top:78px;width:1px;height:24px;background:#fff"></div>
<svg class="a" style="left:339px;top:81px" width="3" height="20" shape-rendering="crispEdges"><rect x="1" y="0" width="1" height="1" fill="#a6a6a6"/><rect x="0" y="1" width="2" height="1" fill="#9a9a9a"/><rect x="2" y="1" width="1" height="2" fill="#fff"/><rect x="0" y="2" width="2" height="1" fill="#fff"/><rect x="1" y="4" width="1" height="1" fill="#a6a6a6"/><rect x="0" y="5" width="2" height="1" fill="#9a9a9a"/><rect x="2" y="5" width="1" height="2" fill="#fff"/><rect x="0" y="6" width="2" height="1" fill="#fff"/><rect x="1" y="8" width="1" height="1" fill="#a6a6a6"/><rect x="0" y="9" width="2" height="1" fill="#9a9a9a"/><rect x="2" y="9" width="1" height="2" fill="#fff"/><rect x="0" y="10" width="2" height="1" fill="#fff"/><rect x="1" y="12" width="1" height="1" fill="#a6a6a6"/><rect x="0" y="13" width="2" height="1" fill="#9a9a9a"/><rect x="2" y="13" width="1" height="2" fill="#fff"/><rect x="0" y="14" width="2" height="1" fill="#fff"/><rect x="1" y="16" width="1" height="1" fill="#a6a6a6"/><rect x="0" y="17" width="2" height="1" fill="#9a9a9a"/><rect x="2" y="17" width="1" height="2" fill="#fff"/><rect x="0" y="18" width="2" height="1" fill="#fff"/></svg>
<svg class="a" style="left:348px;top:82px" width="17" height="17"><rect x="0.5" y="0.5" width="15" height="12" fill="#f4f8ff" stroke="#4060a0"/><rect x="0.5" y="0.5" width="15" height="2" fill="#3050a0"/><path d="M8 5h5v4" fill="none" stroke="#e02040" stroke-width="1.2"/><path d="M11 8h4l-2 3z" fill="#e02040"/><rect x="6.5" y="10.5" width="8" height="5" fill="#f4f8ff" stroke="#28407a"/><rect x="1.5" y="6.5" width="4" height="3" fill="#90a0c0"/></svg>
<div class="a" style="left:370px;top:83px;width:1px;height:16px;background:#c9c9c9"></div>
<svg class="a" style="left:377px;top:83px" width="16" height="15"><path d="M2.5 0.5h3v4h1v10h-6v-10h2zM10.5 0.5h3v4h2v10h-6v-10h1z" fill="#ececec" stroke="#505050"/><rect x="1" y="9" width="5" height="5" fill="#bcbcbc"/><rect x="10" y="9" width="5" height="5" fill="#bcbcbc"/></svg>
<svg class="a" style="left:400px;top:82px" width="17" height="17"><text x="0" y="9" font-family="Liberation Sans" font-size="10" font-weight="bold" fill="#2a5ab8">A</text><text x="9" y="16" font-family="Liberation Sans" font-size="8" font-weight="bold" fill="#606870">B</text><path d="M3 11a5 5 0 0 0 5 4M9 2a4 4 0 0 1 4 4" fill="none" stroke="#3a6ad0" stroke-dasharray="1 1"/></svg>
<svg class="a" style="left:423px;top:82px" width="17" height="17"><text x="0" y="15" font-family="Liberation Mono" font-size="10" fill="#506070">{ }</text><path d="M4 4h9" stroke="#3a6ad0" stroke-width="2"/><path d="M12 0l4 4-4 4z" fill="#3a6ad0"/></svg>
<div class="a" style="left:445px;top:83px;width:1px;height:16px;background:#c9c9c9"></div>
<svg class="a" style="left:451px;top:83px" width="18" height="15"><path d="M6 2h11M9 5h8M9 8h8M9 11h8M6 14h11" stroke="#404a5a"/><path d="M0 8h6" stroke="#3a6ad0" stroke-width="1.5"/><path d="M5 5l3 3-3 3z" fill="#3a6ad0"/></svg>
<svg class="a" style="left:474px;top:83px" width="18" height="15"><path d="M6 2h11M9 5h8M9 8h8M9 11h8M6 14h11" stroke="#404a5a"/><path d="M3 8h6" stroke="#3a6ad0" stroke-width="1.5"/><path d="M4 5L1 8l3 3z" fill="#3a6ad0"/></svg>
<div class="a" style="left:497px;top:83px;width:1px;height:16px;background:#c9c9c9"></div>
<svg class="a" style="left:506px;top:84px" width="12" height="15"><path d="M3.5 3.5h5l3 3v8h-8z" fill="#dfe8f6" stroke="#3a5a90"/><path d="M0.5 10V3a3 3 0 0 1 6 0v9l-3-2z" fill="#3a9a3a" stroke="#206020" stroke-width="0.7"/></svg>
<svg class="a" style="left:527px;top:81px" width="17" height="18"><path d="M3.5 6.5h5l3 3v8h-8z" fill="#dfe8f6" stroke="#3a5a90"/><path d="M0.5 13V6a3 3 0 0 1 6 0v9l-3-2z" fill="#3a9a3a" stroke="#206020" stroke-width="0.7"/><path d="M9 5a3 3 0 0 1 6 0" fill="none" stroke="#2a5ad0" stroke-width="1.3"/><path d="M13 4h4l-2 3z" fill="#2a5ad0"/></svg>
<svg class="a" style="left:550px;top:81px" width="17" height="18"><path d="M8.5 6.5h5l3 3v8h-8z" fill="#dfe8f6" stroke="#3a5a90"/><path d="M5.5 13V6a3 3 0 0 1 6 0v9l-3-2z" fill="#3a9a3a" stroke="#206020" stroke-width="0.7"/><path d="M2 5a3 3 0 0 1 6 0" fill="none" stroke="#2a5ad0" stroke-width="1.3"/><path d="M0 4h4l-2 3z" fill="#2a5ad0"/></svg>
<svg class="a" style="left:572px;top:84px" width="18" height="16"><path d="M3.5 3.5h5l3 3v8h-8z" fill="#dfe8f6" stroke="#3a5a90"/><path d="M0.5 10V3a3 3 0 0 1 6 0v9l-3-2z" fill="#3a9a3a" stroke="#206020" stroke-width="0.7"/><path d="M9 9l6 6M15 9l-6 6" stroke="#ff3040" stroke-width="2"/></svg>
<svg class="a" style="left:595px;top:82px" width="18" height="17"><path d="M7.5 0.5h5l3 3v8h-8z" fill="#dfe8f6" stroke="#7a8aa8"/><path d="M3.5 4.5h5l3 3v8h-8z" fill="#dfe8f6" stroke="#3a5a90"/><path d="M0.5 11V5a3 3 0 0 1 6 0v8l-3-2z" fill="#3a9a3a" stroke="#206020" stroke-width="0.7"/><path d="M10 10l6 6M16 10l-6 6" stroke="#ff3040" stroke-width="2"/></svg>
<div class="a" style="left:618px;top:83px;width:1px;height:16px;background:#c9c9c9"></div>
<svg class="a" style="left:628px;top:82px" width="10" height="17"><path d="M6.5 4v8a2.5 2.5 0 0 1-5 0V3a3 3 0 0 1 6 0v9" fill="none" stroke="#4a6a98" stroke-width="1.6"/></svg>
<svg class="a" style="left:649px;top:84px" width="15" height="14"><path d="M2 1h10l2 11H4z" fill="#d8ccb0" stroke="#704838" stroke-width="1.2"/><path d="M0 11h5v3H2z" fill="#c8b898" stroke="#704838"/></svg>
<div class="a" style="left:670px;top:83px;width:1px;height:16px;background:#c9c9c9"></div>
<svg class="a" style="left:677px;top:82px" width="17" height="17"><path d="M0.5 2.5h11l4 4v10h-15z" fill="#dfe8f6" stroke="#5a7ab0"/><path d="M0.5 0.5L7 4L0.5 7.5Z" fill="url(#gpur)"/><path d="M3 10L7 14L15 5" fill="none" stroke="#3070d0" stroke-width="2.6"/></svg>
<div class="a" style="left:699px;top:83px;width:1px;height:16px;background:#c9c9c9"></div>
<div class="t" style="left:707px;top:82px;font-size:8.5px;line-height:8px;color:#2a3a5a;letter-spacing:0.2px">267<br>268</div>
<div class="t" style="left:729px;top:84px;font-size:10px;color:#3a5ab0">ab/</div>
<div class="a" style="left:759px;top:82px;width:2px;height:17px;background:#48607e"></div>
<svg class="a" style="left:776px;top:83px" width="15" height="15"><path d="M0 6h10" stroke="#2a5ad0" stroke-width="2.5"/><path d="M9 2l5 4-5 4z" fill="#2a5ad0"/><path d="M1 14h13" stroke="#404a5a" stroke-dasharray="1 1.5"/></svg>
<svg class="a" style="left:798px;top:82px" width="17" height="17"><rect x="0.5" y="0.5" width="15" height="15" fill="#eef3fb" stroke="#28407a"/><path d="M2.5 2.5h4M2.5 12.5h11" stroke="#101820" stroke-width="1.2"/><path d="M7 4.5h6M7 6.5h6M7 8.5h6M7 10.5h6" stroke="#8a94a8"/><path d="M9 12.5h4.5" stroke="#101820" stroke-width="1.2"/></svg>
<svg class="a" style="left:821px;top:81px" width="17" height="18"><rect x="0.5" y="1.5" width="15" height="15" fill="#eef3fb" stroke="#28407a"/><path d="M7 5.5h6M7 7.5h6M7 9.5h6M7 11.5h6" stroke="#8a94a8"/><path d="M3 13.5h10.5" stroke="#101820" stroke-width="1.2"/><path d="M2 4a3 3 0 0 1 5 0v4" fill="none" stroke="#2a5ad0" stroke-width="1.2"/></svg>
<div class="pb" style="left:841px;top:80px;width:23px;height:21px"></div>
<svg class="a" style="left:844px;top:82px" width="17" height="17"><rect x="0.5" y="0.5" width="15" height="15" fill="#eef3fb" stroke="#28407a"/><path d="M1 5.5h14" stroke="#28407a"/><path d="M3 3h1.5M6 3h1.5" stroke="#202a40" stroke-width="1.2"/><path d="M9 3h5" stroke="#f08020" stroke-width="1.4"/><path d="M3 8.5h10M3 10.5h10M3 12.5h7" stroke="#2a4ab0"/></svg>
<div class="a" style="left:335px;top:102px;width:862px;height:2px;background:#8e949c"></div>

<!-- editor -->
<div class="a" style="left:336px;top:104px;width:861px;height:503px;background:#fff"></div>
<div class="a" style="left:335px;top:104px;width:1px;height:503px;background:#8e949c"></div>
<div class="a" style="left:336px;top:104px;width:56px;height:503px;background:#e4e3dd"></div>
<svg class="a" style="left:392px;top:104px" width="14" height="503"><defs><pattern id="hatch" width="2" height="2" patternUnits="userSpaceOnUse"><rect width="2" height="2" fill="#fff"/><rect width="1" height="1" fill="#dcdcdc"/><rect x="1" y="1" width="1" height="1" fill="#dcdcdc"/></pattern></defs><rect width="14" height="503" fill="url(#hatch)" shape-rendering="crispEdges"/></svg>
<!-- fold markers -->
<svg class="a" style="left:394px;top:155px" width="12" height="140" shape-rendering="crispEdges"><rect x="0.5" y="0.5" width="10" height="10" fill="#fff" stroke="#000"/><path d="M2 5.5h7M5.5 13v119.5h6" fill="none" stroke="#000"/></svg>
<svg class="a" style="left:394px;top:587px" width="12" height="20" shape-rendering="crispEdges"><rect x="0.5" y="0.5" width="10" height="10" fill="#fff" stroke="#000"/><path d="M2 5.5h7M5.5 13v10" fill="none" stroke="#000"/></svg>
<div class="a" style="left:590px;top:296px;width:1px;height:16px;background:#000"></div>
<svg width="0" height="0" style="position:absolute"><defs><path id="g0" d="M5 9h2v1h-2zM4 10h1v1h-1zM7 10h1v1h-1zM4 11h1v1h-1zM7 11h1v1h-1zM5 12h2v1h-2z"/><path id="g1" d="M11 5h1v1h-1zM1 6h12v1h-12z"/><path id="g2" d="M7 1h1v1h-1zM1 2h12v1h-12zM4 3h1v1h-1zM10 3h1v1h-1zM4 4h7v1h-7zM2 6h11v1h-11zM2 7h1v1h-1zM12 7h1v1h-1zM2 8h1v1h-1zM5 8h5v1h-5zM12 8h1v1h-1zM5 9h1v1h-1zM9 9h1v1h-1zM5 10h1v1h-1zM9 10h1v1h-1zM4 11h1v1h-1zM9 11h1v1h-1zM12 11h1v1h-1zM2 12h2v1h-2zM10 12h3v1h-3z"/><path id="g3" d="M6 1h1v1h-1zM6 2h1v1h-1zM6 3h1v1h-1zM6 4h1v1h-1zM6 5h1v1h-1zM6 6h1v1h-1zM5 7h1v1h-1zM7 7h1v1h-1zM5 8h1v1h-1zM7 8h1v1h-1zM4 9h1v1h-1zM8 9h1v1h-1zM3 10h1v1h-1zM9 10h1v1h-1zM2 11h1v1h-1zM10 11h3v1h-3zM1 12h1v1h-1zM11 12h1v1h-1z"/><path id="g4" d="M4 1h1v1h-1zM12 1h1v1h-1zM4 2h6v1h-6zM12 2h1v1h-1zM3 3h1v1h-1zM6 3h1v1h-1zM10 3h1v1h-1zM12 3h1v1h-1zM3 4h1v1h-1zM5 4h1v1h-1zM8 4h1v1h-1zM10 4h1v1h-1zM12 4h1v1h-1zM2 5h2v1h-2zM5 5h6v1h-6zM12 5h1v1h-1zM1 6h1v1h-1zM3 6h1v1h-1zM7 6h1v1h-1zM10 6h1v1h-1zM12 6h1v1h-1zM3 7h1v1h-1zM7 7h1v1h-1zM10 7h1v1h-1zM12 7h1v1h-1zM3 8h1v1h-1zM5 8h4v1h-4zM10 8h1v1h-1zM12 8h1v1h-1zM3 9h1v1h-1zM7 9h1v1h-1zM10 9h1v1h-1zM12 9h1v1h-1zM3 10h1v1h-1zM7 10h2v1h-2zM12 10h1v1h-1zM3 11h1v1h-1zM5 11h2v1h-2zM10 11h1v1h-1zM12 11h1v1h-1zM3 12h1v1h-1zM11 12h1v1h-1z"/><path id="g5" d="M12 1h1v1h-1zM1 2h7v1h-7zM12 2h1v1h-1zM4 3h1v1h-1zM9 3h1v1h-1zM12 3h1v1h-1zM3 4h1v1h-1zM6 4h1v1h-1zM9 4h1v1h-1zM12 4h1v1h-1zM2 5h6v1h-6zM9 5h1v1h-1zM12 5h1v1h-1zM4 6h1v1h-1zM9 6h1v1h-1zM12 6h1v1h-1zM4 7h1v1h-1zM9 7h1v1h-1zM12 7h1v1h-1zM2 8h6v1h-6zM9 8h1v1h-1zM12 8h1v1h-1zM4 9h1v1h-1zM9 9h1v1h-1zM12 9h1v1h-1zM4 10h1v1h-1zM12 10h1v1h-1zM4 11h4v1h-4zM12 11h1v1h-1zM1 12h3v1h-3zM10 12h3v1h-3z"/><path id="g6" d="M6 1h1v1h-1zM2 2h1v1h-1zM6 2h1v1h-1zM10 2h1v1h-1zM3 3h1v1h-1zM6 3h1v1h-1zM9 3h1v1h-1zM4 4h1v1h-1zM6 4h1v1h-1zM8 4h1v1h-1zM6 5h1v1h-1zM2 6h9v1h-9zM6 7h1v1h-1zM6 8h1v1h-1zM1 9h11v1h-11zM6 10h1v1h-1zM6 11h1v1h-1zM6 12h1v1h-1z"/><path id="g7" d="M9 1h3v1h-3zM3 2h6v1h-6zM3 3h1v1h-1zM3 4h1v1h-1zM3 5h10v1h-10zM3 6h1v1h-1zM3 7h1v1h-1zM3 8h1v1h-1zM5 8h7v1h-7zM3 9h1v1h-1zM5 9h1v1h-1zM11 9h1v1h-1zM2 10h1v1h-1zM5 10h1v1h-1zM11 10h1v1h-1zM2 11h1v1h-1zM5 11h7v1h-7zM1 12h1v1h-1zM5 12h1v1h-1zM11 12h1v1h-1z"/><path id="g8" d="M4 1h1v1h-1zM10 1h3v1h-3zM3 2h1v1h-1zM5 2h5v1h-5zM2 3h1v1h-1zM5 3h1v1h-1zM9 3h1v1h-1zM1 4h1v1h-1zM4 4h9v1h-9zM3 5h1v1h-1zM5 5h1v1h-1zM9 5h1v1h-1zM2 6h2v1h-2zM5 6h1v1h-1zM7 6h6v1h-6zM1 7h1v1h-1zM3 7h1v1h-1zM5 7h1v1h-1zM7 7h1v1h-1zM12 7h1v1h-1zM3 8h1v1h-1zM5 8h1v1h-1zM7 8h6v1h-6zM3 9h1v1h-1zM5 9h1v1h-1zM7 9h1v1h-1zM12 9h1v1h-1zM3 10h1v1h-1zM5 10h1v1h-1zM7 10h6v1h-6zM3 11h1v1h-1zM5 11h1v1h-1zM7 11h1v1h-1zM12 11h1v1h-1zM3 12h2v1h-2zM7 12h6v1h-6z"/><path id="g9" d="M6 1h1v1h-1zM6 2h1v1h-1zM1 3h12v1h-12zM5 4h1v1h-1zM8 4h1v1h-1zM4 5h1v1h-1zM9 5h1v1h-1zM3 6h1v1h-1zM6 6h1v1h-1zM10 6h1v1h-1zM1 7h2v1h-2zM7 7h1v1h-1zM11 7h2v1h-2zM4 9h1v1h-1zM6 9h1v1h-1zM11 9h1v1h-1zM2 10h1v1h-1zM4 10h1v1h-1zM7 10h1v1h-1zM9 10h1v1h-1zM12 10h1v1h-1zM2 11h1v1h-1zM4 11h1v1h-1zM9 11h1v1h-1zM12 11h1v1h-1zM1 12h1v1h-1zM5 12h5v1h-5z"/><path id="g10" d="M3 1h1v1h-1zM7 1h1v1h-1zM3 2h1v1h-1zM7 2h1v1h-1zM10 2h2v1h-2zM3 3h1v1h-1zM7 3h3v1h-3zM1 4h5v1h-5zM7 4h1v1h-1zM12 4h1v1h-1zM3 5h1v1h-1zM7 5h6v1h-6zM3 6h1v1h-1zM3 7h2v1h-2zM7 7h5v1h-5zM1 8h3v1h-3zM7 8h1v1h-1zM11 8h1v1h-1zM3 9h1v1h-1zM7 9h5v1h-5zM3 10h1v1h-1zM7 10h1v1h-1zM11 10h1v1h-1zM1 11h1v1h-1zM3 11h1v1h-1zM7 11h1v1h-1zM11 11h1v1h-1zM2 12h1v1h-1zM7 12h5v1h-5z"/><path id="g11" d="M10 1h1v1h-1zM1 2h4v1h-4zM10 2h1v1h-1zM1 3h1v1h-1zM4 3h1v1h-1zM10 3h1v1h-1zM1 4h1v1h-1zM4 4h9v1h-9zM1 5h1v1h-1zM4 5h1v1h-1zM10 5h1v1h-1zM1 6h4v1h-4zM6 6h1v1h-1zM10 6h1v1h-1zM1 7h1v1h-1zM4 7h1v1h-1zM7 7h1v1h-1zM10 7h1v1h-1zM1 8h1v1h-1zM4 8h1v1h-1zM7 8h1v1h-1zM10 8h1v1h-1zM1 9h1v1h-1zM4 9h1v1h-1zM10 9h1v1h-1zM1 10h4v1h-4zM10 10h1v1h-1zM1 11h1v1h-1zM4 11h1v1h-1zM8 11h1v1h-1zM10 11h1v1h-1zM9 12h1v1h-1z"/><path id="g12" d="M4 1h7v1h-7zM4 2h1v1h-1zM10 2h1v1h-1zM4 3h7v1h-7zM4 4h1v1h-1zM10 4h1v1h-1zM1 5h12v1h-12zM3 6h1v1h-1zM6 6h1v1h-1zM3 7h4v1h-4zM8 7h4v1h-4zM3 8h1v1h-1zM6 8h1v1h-1zM8 8h1v1h-1zM11 8h1v1h-1zM3 9h4v1h-4zM9 9h1v1h-1zM11 9h1v1h-1zM3 10h1v1h-1zM6 10h2v1h-2zM10 10h1v1h-1zM1 11h6v1h-6zM9 11h1v1h-1zM11 11h1v1h-1zM6 12h3v1h-3zM12 12h1v1h-1z"/><path id="g13" d="M3 1h1v1h-1zM3 2h1v1h-1zM7 2h4v1h-4zM3 3h1v1h-1zM7 3h1v1h-1zM10 3h1v1h-1zM1 4h5v1h-5zM7 4h1v1h-1zM10 4h1v1h-1zM3 5h1v1h-1zM7 5h1v1h-1zM10 5h1v1h-1zM2 6h3v1h-3zM7 6h1v1h-1zM10 6h1v1h-1zM2 7h2v1h-2zM5 7h1v1h-1zM7 7h1v1h-1zM10 7h1v1h-1zM1 8h1v1h-1zM3 8h1v1h-1zM5 8h1v1h-1zM7 8h1v1h-1zM10 8h1v1h-1zM1 9h1v1h-1zM3 9h1v1h-1zM7 9h1v1h-1zM10 9h1v1h-1zM3 10h1v1h-1zM6 10h1v1h-1zM10 10h1v1h-1zM12 10h1v1h-1zM3 11h1v1h-1zM6 11h1v1h-1zM10 11h1v1h-1zM12 11h1v1h-1zM3 12h1v1h-1zM5 12h1v1h-1zM10 12h3v1h-3z"/><path id="g14" d="M7 1h1v1h-1zM2 2h1v1h-1zM7 2h1v1h-1zM3 3h1v1h-1zM6 3h7v1h-7zM3 4h1v1h-1zM6 4h1v1h-1zM11 4h1v1h-1zM5 5h1v1h-1zM8 5h1v1h-1zM10 5h1v1h-1zM3 6h1v1h-1zM8 6h1v1h-1zM3 7h1v1h-1zM8 7h1v1h-1zM1 8h2v1h-2zM8 8h2v1h-2zM2 9h1v1h-1zM7 9h1v1h-1zM9 9h1v1h-1zM2 10h1v1h-1zM7 10h1v1h-1zM10 10h1v1h-1zM2 11h1v1h-1zM6 11h1v1h-1zM11 11h1v1h-1zM5 12h1v1h-1zM12 12h1v1h-1z"/><path id="g15" d="M3 1h1v1h-1zM3 2h9v1h-9zM2 3h1v1h-1zM1 4h1v1h-1zM4 4h6v1h-6zM4 5h1v1h-1zM6 5h1v1h-1zM9 5h1v1h-1zM4 6h1v1h-1zM7 6h1v1h-1zM9 6h1v1h-1zM1 7h11v1h-11zM3 8h1v1h-1zM6 8h1v1h-1zM9 8h1v1h-1zM3 9h1v1h-1zM7 9h1v1h-1zM9 9h1v1h-1zM2 10h10v1h-10zM9 11h1v1h-1zM7 12h2v1h-2z"/><path id="g16" d="M4 1h1v1h-1zM4 2h1v1h-1zM7 2h6v1h-6zM2 3h1v1h-1zM4 3h1v1h-1zM6 3h1v1h-1zM10 3h1v1h-1zM2 4h1v1h-1zM4 4h2v1h-2zM10 4h1v1h-1zM2 5h1v1h-1zM4 5h1v1h-1zM10 5h1v1h-1zM1 6h1v1h-1zM4 6h1v1h-1zM10 6h1v1h-1zM4 7h1v1h-1zM10 7h1v1h-1zM4 8h1v1h-1zM10 8h1v1h-1zM3 9h1v1h-1zM5 9h1v1h-1zM10 9h1v1h-1zM3 10h1v1h-1zM6 10h1v1h-1zM10 10h1v1h-1zM2 11h1v1h-1zM8 11h1v1h-1zM10 11h1v1h-1zM1 12h1v1h-1zM9 12h1v1h-1z"/><path id="g17" d="M3 1h1v1h-1zM10 1h2v1h-2zM3 2h1v1h-1zM6 2h4v1h-4zM1 3h1v1h-1zM3 3h1v1h-1zM5 3h2v1h-2zM9 3h1v1h-1zM1 4h1v1h-1zM3 4h2v1h-2zM6 4h1v1h-1zM9 4h1v1h-1zM1 5h1v1h-1zM3 5h1v1h-1zM6 5h1v1h-1zM9 5h1v1h-1zM1 6h1v1h-1zM3 6h1v1h-1zM6 6h7v1h-7zM3 7h1v1h-1zM9 7h1v1h-1zM3 8h1v1h-1zM6 8h1v1h-1zM9 8h1v1h-1zM3 9h2v1h-2zM6 9h1v1h-1zM9 9h1v1h-1zM11 9h1v1h-1zM2 10h1v1h-1zM5 10h1v1h-1zM9 10h1v1h-1zM12 10h1v1h-1zM2 11h1v1h-1zM4 11h1v1h-1zM7 11h1v1h-1zM9 11h1v1h-1zM12 11h1v1h-1zM1 12h1v1h-1zM8 12h1v1h-1z"/><path id="g18" d="M4 1h1v1h-1zM8 1h1v1h-1zM11 1h1v1h-1zM1 2h1v1h-1zM4 2h1v1h-1zM8 2h1v1h-1zM12 2h1v1h-1zM2 3h1v1h-1zM4 3h1v1h-1zM8 3h1v1h-1zM2 4h1v1h-1zM4 4h9v1h-9zM4 5h1v1h-1zM8 5h1v1h-1zM4 6h1v1h-1zM8 6h1v1h-1zM3 7h2v1h-2zM8 7h1v1h-1zM1 8h2v1h-2zM4 8h1v1h-1zM7 8h1v1h-1zM9 8h1v1h-1zM4 9h1v1h-1zM7 9h1v1h-1zM9 9h1v1h-1zM4 10h1v1h-1zM6 10h1v1h-1zM10 10h1v1h-1zM4 11h1v1h-1zM6 11h1v1h-1zM11 11h1v1h-1zM4 12h2v1h-2zM12 12h1v1h-1z"/><path id="g19" d="M6 1h7v1h-7zM1 2h5v1h-5zM10 2h1v1h-1zM3 3h1v1h-1zM9 3h1v1h-1zM3 4h1v1h-1zM9 4h1v1h-1zM3 5h1v1h-1zM8 5h2v1h-2zM1 6h5v1h-5zM8 6h3v1h-3zM3 7h1v1h-1zM7 7h1v1h-1zM9 7h1v1h-1zM11 7h1v1h-1zM3 8h1v1h-1zM7 8h1v1h-1zM9 8h1v1h-1zM12 8h1v1h-1zM3 9h2v1h-2zM6 9h1v1h-1zM9 9h1v1h-1zM12 9h1v1h-1zM1 10h2v1h-2zM5 10h1v1h-1zM9 10h1v1h-1zM9 11h1v1h-1zM9 12h1v1h-1z"/><path id="g20" d="M3 1h8v1h-8zM1 5h12v1h-12zM7 6h1v1h-1zM4 7h1v1h-1zM7 7h1v1h-1zM9 7h1v1h-1zM4 8h1v1h-1zM7 8h1v1h-1zM10 8h1v1h-1zM3 9h1v1h-1zM7 9h1v1h-1zM11 9h1v1h-1zM2 10h1v1h-1zM7 10h1v1h-1zM12 10h1v1h-1zM1 11h1v1h-1zM7 11h1v1h-1zM12 11h1v1h-1zM5 12h3v1h-3z"/><path id="g21" d="M4 1h2v1h-2zM9 1h1v1h-1zM1 2h3v1h-3zM9 2h1v1h-1zM3 3h1v1h-1zM9 3h1v1h-1zM3 4h1v1h-1zM7 4h1v1h-1zM9 4h1v1h-1zM11 4h1v1h-1zM1 5h5v1h-5zM7 5h1v1h-1zM9 5h1v1h-1zM12 5h1v1h-1zM3 6h1v1h-1zM6 6h1v1h-1zM9 6h1v1h-1zM12 6h1v1h-1zM2 7h3v1h-3zM6 7h1v1h-1zM9 7h1v1h-1zM2 8h2v1h-2zM5 8h1v1h-1zM9 8h1v1h-1zM11 8h1v1h-1zM1 9h1v1h-1zM3 9h1v1h-1zM10 9h1v1h-1zM3 10h1v1h-1zM9 10h1v1h-1zM3 11h1v1h-1zM7 11h2v1h-2zM3 12h1v1h-1zM5 12h2v1h-2z"/><path id="g22" d="M3 1h1v1h-1zM3 2h1v1h-1zM6 2h6v1h-6zM2 3h1v1h-1zM9 3h1v1h-1zM2 4h1v1h-1zM5 4h1v1h-1zM9 4h1v1h-1zM1 5h4v1h-4zM9 5h1v1h-1zM3 6h1v1h-1zM9 6h1v1h-1zM2 7h1v1h-1zM9 7h1v1h-1zM2 8h1v1h-1zM4 8h2v1h-2zM9 8h1v1h-1zM1 9h3v1h-3zM9 9h1v1h-1zM5 10h1v1h-1zM9 10h1v1h-1zM3 11h2v1h-2zM9 11h1v1h-1zM1 12h2v1h-2zM5 12h8v1h-8z"/><path id="g23" d="M3 1h1v1h-1zM6 1h6v1h-6zM3 2h1v1h-1zM11 2h1v1h-1zM2 3h1v1h-1zM7 3h5v1h-5zM2 4h1v1h-1zM4 4h1v1h-1zM11 4h1v1h-1zM1 5h3v1h-3zM5 5h8v1h-8zM3 6h1v1h-1zM9 6h1v1h-1zM2 7h1v1h-1zM6 7h1v1h-1zM9 7h1v1h-1zM11 7h2v1h-2zM2 8h3v1h-3zM7 8h1v1h-1zM9 8h2v1h-2zM1 9h2v1h-2zM8 9h2v1h-2zM11 9h1v1h-1zM7 10h1v1h-1zM9 10h1v1h-1zM12 10h1v1h-1zM3 11h2v1h-2zM6 11h1v1h-1zM9 11h1v1h-1zM12 11h1v1h-1zM1 12h2v1h-2zM8 12h2v1h-2z"/><path id="g24" d="M3 1h1v1h-1zM6 1h6v1h-6zM2 2h1v1h-1zM1 3h1v1h-1zM4 4h1v1h-1zM3 5h1v1h-1zM5 5h8v1h-8zM2 6h2v1h-2zM9 6h1v1h-1zM1 7h1v1h-1zM3 7h1v1h-1zM9 7h1v1h-1zM3 8h1v1h-1zM9 8h1v1h-1zM3 9h1v1h-1zM9 9h1v1h-1zM3 10h1v1h-1zM9 10h1v1h-1zM3 11h1v1h-1zM7 11h1v1h-1zM9 11h1v1h-1zM3 12h1v1h-1zM8 12h1v1h-1z"/><path id="g25" d="M2 1h1v1h-1zM9 1h1v1h-1zM3 2h1v1h-1zM9 2h1v1h-1zM3 3h1v1h-1zM9 3h1v1h-1zM9 4h1v1h-1zM1 5h3v1h-3zM6 5h7v1h-7zM3 6h1v1h-1zM9 6h1v1h-1zM3 7h1v1h-1zM9 7h1v1h-1zM3 8h1v1h-1zM9 8h1v1h-1zM3 9h1v1h-1zM9 9h1v1h-1zM3 10h1v1h-1zM5 10h1v1h-1zM9 10h1v1h-1zM3 11h2v1h-2zM9 11h1v1h-1zM3 12h1v1h-1zM9 12h1v1h-1z"/><path id="g26" d="M2 1h1v1h-1zM7 1h4v1h-4zM3 2h1v1h-1zM7 2h1v1h-1zM10 2h1v1h-1zM3 3h1v1h-1zM7 3h1v1h-1zM10 3h1v1h-1zM6 4h1v1h-1zM11 4h2v1h-2zM1 5h3v1h-3zM5 5h1v1h-1zM3 6h1v1h-1zM6 6h6v1h-6zM3 7h1v1h-1zM7 7h1v1h-1zM11 7h1v1h-1zM3 8h1v1h-1zM7 8h1v1h-1zM10 8h1v1h-1zM3 9h1v1h-1zM5 9h1v1h-1zM8 9h1v1h-1zM10 9h1v1h-1zM3 10h2v1h-2zM9 10h1v1h-1zM3 11h1v1h-1zM7 11h2v1h-2zM10 11h1v1h-1zM5 12h2v1h-2zM11 12h2v1h-2z"/><path id="g27" d="M4 1h1v1h-1zM4 2h1v1h-1zM8 2h4v1h-4zM2 3h5v1h-5zM11 3h1v1h-1zM4 4h1v1h-1zM11 4h1v1h-1zM4 5h1v1h-1zM8 5h4v1h-4zM1 6h6v1h-6zM8 6h1v1h-1zM4 7h1v1h-1zM8 7h1v1h-1zM12 7h1v1h-1zM2 8h1v1h-1zM4 8h3v1h-3zM8 8h1v1h-1zM12 8h1v1h-1zM2 9h1v1h-1zM4 9h1v1h-1zM8 9h1v1h-1zM12 9h1v1h-1zM2 10h3v1h-3zM9 10h4v1h-4zM2 11h1v1h-1zM4 11h1v1h-1zM1 12h1v1h-1zM5 12h8v1h-8z"/><path id="g28" d="M2 1h1v1h-1zM5 1h7v1h-7zM3 2h1v1h-1zM7 2h1v1h-1zM9 2h1v1h-1zM3 3h1v1h-1zM8 3h1v1h-1zM5 4h7v1h-7zM5 5h1v1h-1zM8 5h1v1h-1zM11 5h1v1h-1zM1 6h3v1h-3zM5 6h7v1h-7zM3 7h1v1h-1zM5 7h1v1h-1zM8 7h1v1h-1zM11 7h1v1h-1zM3 8h1v1h-1zM5 8h7v1h-7zM3 9h1v1h-1zM5 9h1v1h-1zM8 9h1v1h-1zM11 9h1v1h-1zM3 10h1v1h-1zM5 10h1v1h-1zM8 10h1v1h-1zM10 10h2v1h-2zM2 11h1v1h-1zM4 11h1v1h-1zM1 12h1v1h-1zM5 12h8v1h-8z"/><path id="g29" d="M3 1h1v1h-1zM6 1h6v1h-6zM4 2h1v1h-1zM11 2h1v1h-1zM2 3h1v1h-1zM11 3h1v1h-1zM2 4h1v1h-1zM6 4h1v1h-1zM11 4h1v1h-1zM2 5h1v1h-1zM6 5h1v1h-1zM11 5h1v1h-1zM2 6h1v1h-1zM6 6h1v1h-1zM11 6h1v1h-1zM2 7h1v1h-1zM5 7h1v1h-1zM7 7h1v1h-1zM11 7h1v1h-1zM2 8h1v1h-1zM4 8h1v1h-1zM8 8h1v1h-1zM11 8h1v1h-1zM2 9h2v1h-2zM9 9h1v1h-1zM11 9h1v1h-1zM2 10h1v1h-1zM11 10h1v1h-1zM2 11h1v1h-1zM11 11h1v1h-1zM2 12h1v1h-1zM9 12h3v1h-3z"/><path id="g30" d="M4 9h2v1h-2zM4 10h2v1h-2zM5 11h1v1h-1zM4 12h1v1h-1z"/></defs></svg><div class="ed"><i style="top:104px">1</i><i style="top:120px">2</i><i style="top:136px">3</i><i style="top:152px">4</i><i style="top:168px">5</i><i style="top:184px">6</i><i style="top:200px">7</i><i style="top:216px">8</i><i style="top:232px">9</i><i style="top:248px">10</i><i style="top:264px">11</i><i style="top:280px">12</i><i style="top:296px">13</i><i style="top:312px">14</i><i style="top:328px">15</i><i style="top:344px">16</i><i style="top:360px">17</i><i style="top:376px">18</i><i style="top:392px">19</i><i style="top:408px">20</i><i style="top:424px">21</i><i style="top:440px">22</i><i style="top:456px">23</i><i style="top:472px">24</i><i style="top:488px">25</i><i style="top:504px">26</i><i style="top:520px">27</i><i style="top:536px">28</i><i style="top:552px">29</i><i style="top:568px">30</i><i style="top:584px">31</i><i style="top:600px">32</i><b class="c" style="left:407px;top:104px">/*</b>
<b class="c" style="left:407px;top:120px">30</b>
<svg class="c" style="left:423px;top:120px"><use href="#g21"/></svg>
<svg class="c" style="left:437px;top:120px"><use href="#g23"/></svg>
<svg class="c" style="left:451px;top:120px"><use href="#g16"/></svg>
<svg class="c" style="left:465px;top:120px"><use href="#g4"/></svg>
<svg class="c" style="left:479px;top:120px"><use href="#g25"/></svg>
<svg class="c" style="left:493px;top:120px"><use href="#g11"/></svg>
<b class="c" style="left:507px;top:120px">+30</b>
<svg class="c" style="left:531px;top:120px"><use href="#g21"/></svg>
<svg class="c" style="left:545px;top:120px"><use href="#g22"/></svg>
<svg class="c" style="left:559px;top:120px"><use href="#g16"/></svg>
<svg class="c" style="left:573px;top:120px"><use href="#g4"/></svg>
<svg class="c" style="left:587px;top:120px"><use href="#g25"/></svg>
<svg class="c" style="left:601px;top:120px"><use href="#g11"/></svg>
<svg class="c" style="left:615px;top:120px"><use href="#g30"/></svg>
<svg class="c" style="left:629px;top:120px"><use href="#g4"/></svg>
<svg class="c" style="left:643px;top:120px"><use href="#g25"/></svg>
<svg class="c" style="left:657px;top:120px"><use href="#g11"/></svg>
<svg class="c" style="left:671px;top:120px"><use href="#g12"/></svg>
<svg class="c" style="left:685px;top:120px"><use href="#g7"/></svg>
<b class="c" style="left:699px;top:120px">5</b>
<svg class="c" style="left:707px;top:120px"><use href="#g21"/></svg>
<svg class="c" style="left:721px;top:120px"><use href="#g11"/></svg>
<svg class="c" style="left:735px;top:120px"><use href="#g25"/></svg>
<svg class="c" style="left:749px;top:120px"><use href="#g11"/></svg>
<svg class="c" style="left:763px;top:120px"><use href="#g15"/></svg>
<svg class="c" style="left:777px;top:120px"><use href="#g6"/></svg>
<svg class="c" style="left:791px;top:120px"><use href="#g21"/></svg>
<svg class="c" style="left:805px;top:120px"><use href="#g29"/></svg>
<svg class="c" style="left:819px;top:120px"><use href="#g17"/></svg>
<svg class="c" style="left:833px;top:120px"><use href="#g1"/></svg>
<svg class="c" style="left:847px;top:120px"><use href="#g14"/></svg>
<svg class="c" style="left:861px;top:120px"><use href="#g0"/></svg>
<svg class="c" style="left:875px;top:120px"><use href="#g22"/></svg>
<svg class="c" style="left:889px;top:120px"><use href="#g16"/></svg>
<svg class="c" style="left:903px;top:120px"><use href="#g2"/></svg>
<svg class="c" style="left:917px;top:120px"><use href="#g27"/></svg>
<svg class="c" style="left:931px;top:120px"><use href="#g11"/></svg>
<svg class="c" style="left:945px;top:120px"><use href="#g30"/></svg>
<svg class="c" style="left:959px;top:120px"><use href="#g26"/></svg>
<svg class="c" style="left:973px;top:120px"><use href="#g25"/></svg>
<svg class="c" style="left:987px;top:120px"><use href="#g24"/></svg>
<svg class="c" style="left:1001px;top:120px"><use href="#g3"/></svg>
<svg class="c" style="left:1015px;top:120px"><use href="#g28"/></svg>
<svg class="c" style="left:1029px;top:120px"><use href="#g24"/></svg>
<svg class="c" style="left:1043px;top:120px"><use href="#g10"/></svg>
<svg class="c" style="left:1057px;top:120px"><use href="#g20"/></svg>
<svg class="c" style="left:1071px;top:120px"><use href="#g16"/></svg>
<svg class="c" style="left:1085px;top:120px"><use href="#g0"/></svg>
<b class="c" style="left:407px;top:136px">*/</b>
<b class="k" style="left:407px;top:152px">module</b>
<b class="p" style="left:455px;top:152px"> led(</b>
<b class="k" style="left:407px;top:168px">input</b>
<b class="p" style="left:447px;top:168px"> clk,</b>
<b class="c" style="left:487px;top:168px">//50Mhz</b>
<b class="k" style="left:407px;top:184px">input</b>
<b class="p" style="left:447px;top:184px"> clk</b>
<s class="p" style="left:479px;top:184px"></s>
<b class="p" style="left:487px;top:184px">1Hz,</b>
<b class="c" style="left:519px;top:184px">//</b>
<svg class="c" style="left:535px;top:184px"><use href="#g5"/></svg>
<b class="c" style="left:549px;top:184px">1Hz</b>
<b class="k" style="left:407px;top:200px">input</b>
<b class="p" style="left:447px;top:200px"> clk</b>
<s class="p" style="left:479px;top:200px"></s>
<b class="p" style="left:487px;top:200px">2Hz,</b>
<b class="c" style="left:519px;top:200px">//</b>
<svg class="c" style="left:535px;top:200px"><use href="#g5"/></svg>
<b class="c" style="left:549px;top:200px">2Hz</b>
<b class="k" style="left:407px;top:216px">output</b>
<b class="p" style="left:455px;top:216px"> [</b>
<b class="n" style="left:471px;top:216px">7</b>
<b class="p" style="left:479px;top:216px">:</b>
<b class="n" style="left:487px;top:216px">0</b>
<b class="p" style="left:495px;top:216px">] time</b>
<s class="p" style="left:543px;top:216px"></s>
<b class="p" style="left:551px;top:216px">cnt,</b>
<b class="c" style="left:583px;top:216px">//</b>
<svg class="c" style="left:599px;top:216px"><use href="#g4"/></svg>
<svg class="c" style="left:613px;top:216px"><use href="#g25"/></svg>
<svg class="c" style="left:627px;top:216px"><use href="#g11"/></svg>
<b class="k" style="left:407px;top:232px">output</b>
<b class="p" style="left:455px;top:232px"> </b>
<b class="k" style="left:463px;top:232px">reg</b>
<b class="p" style="left:487px;top:232px"> led</b>
<s class="p" style="left:519px;top:232px"></s>
<b class="p" style="left:527px;top:232px">red, </b>
<b class="c" style="left:567px;top:232px">//</b>
<svg class="c" style="left:583px;top:232px"><use href="#g22"/></svg>
<svg class="c" style="left:597px;top:232px"><use href="#g16"/></svg>
<b class="k" style="left:407px;top:248px">output</b>
<b class="p" style="left:455px;top:248px"> </b>
<b class="k" style="left:463px;top:248px">reg</b>
<b class="p" style="left:487px;top:248px"> led</b>
<s class="p" style="left:519px;top:248px"></s>
<b class="p" style="left:527px;top:248px">green</b>
<b class="c" style="left:567px;top:248px">//</b>
<svg class="c" style="left:583px;top:248px"><use href="#g23"/></svg>
<svg class="c" style="left:597px;top:248px"><use href="#g16"/></svg>
<b class="p" style="left:407px;top:264px">);</b>
<b class="k" style="left:407px;top:296px">parameter</b>
<b class="p" style="left:479px;top:296px"> s</b>
<s class="p" style="left:495px;top:296px"></s>
<b class="p" style="left:503px;top:296px">green=</b>
<b class="n" style="left:551px;top:296px">2&#x27;d0</b>
<b class="p" style="left:583px;top:296px">;</b>
<b class="k" style="left:407px;top:312px">parameter</b>
<b class="p" style="left:479px;top:312px"> s</b>
<s class="p" style="left:495px;top:312px"></s>
<b class="p" style="left:503px;top:312px">green</b>
<s class="p" style="left:543px;top:312px"></s>
<b class="p" style="left:551px;top:312px">5=</b>
<b class="n" style="left:567px;top:312px">2&#x27;d1</b>
<b class="p" style="left:599px;top:312px">;</b>
<b class="k" style="left:407px;top:328px">parameter</b>
<b class="p" style="left:479px;top:328px"> s</b>
<s class="p" style="left:495px;top:328px"></s>
<b class="p" style="left:503px;top:328px">red=</b>
<b class="n" style="left:535px;top:328px">2&#x27;d2</b>
<b class="p" style="left:567px;top:328px">;</b>
<b class="k" style="left:407px;top:344px">parameter</b>
<b class="p" style="left:479px;top:344px"> s</b>
<s class="p" style="left:495px;top:344px"></s>
<b class="p" style="left:503px;top:344px">red</b>
<s class="p" style="left:527px;top:344px"></s>
<b class="p" style="left:535px;top:344px">5=</b>
<b class="n" style="left:551px;top:344px">2&#x27;d3</b>
<b class="p" style="left:583px;top:344px">;</b>
<b class="k" style="left:407px;top:376px">reg</b>
<b class="p" style="left:431px;top:376px"> [</b>
<b class="n" style="left:447px;top:376px">1</b>
<b class="p" style="left:455px;top:376px">:</b>
<b class="n" style="left:463px;top:376px">0</b>
<b class="p" style="left:471px;top:376px">] state=</b>
<b class="n" style="left:535px;top:376px">2&#x27;d0</b>
<b class="p" style="left:567px;top:376px">;</b>
<b class="c" style="left:407px;top:392px">//</b>
<svg class="c" style="left:423px;top:392px"><use href="#g18"/></svg>
<svg class="c" style="left:437px;top:392px"><use href="#g9"/></svg>
<svg class="c" style="left:451px;top:392px"><use href="#g13"/></svg>
<b class="k" style="left:407px;top:408px">reg</b>
<b class="p" style="left:431px;top:408px"> [</b>
<b class="n" style="left:447px;top:408px">7</b>
<b class="p" style="left:455px;top:408px">:</b>
<b class="n" style="left:463px;top:408px">0</b>
<b class="p" style="left:471px;top:408px">] down</b>
<s class="p" style="left:519px;top:408px"></s>
<b class="p" style="left:527px;top:408px">cnt=</b>
<b class="n" style="left:559px;top:408px">8&#x27;d30</b>
<b class="p" style="left:599px;top:408px">;</b>
<b class="k" style="left:407px;top:424px">always</b>
<b class="p" style="left:455px;top:424px">@(</b>
<b class="k" style="left:471px;top:424px">posedge</b>
<b class="p" style="left:527px;top:424px"> clk)</b>
<b class="k" style="left:407px;top:440px">if</b>
<b class="p" style="left:423px;top:440px">(clk</b>
<s class="p" style="left:455px;top:440px"></s>
<b class="p" style="left:463px;top:440px">1Hz)</b>
<b class="c" style="left:495px;top:440px">//1Hz</b>
<svg class="c" style="left:535px;top:440px"><use href="#g4"/></svg>
<svg class="c" style="left:549px;top:440px"><use href="#g25"/></svg>
<svg class="c" style="left:563px;top:440px"><use href="#g11"/></svg>
<svg class="c" style="left:577px;top:440px"><use href="#g1"/></svg>
<svg class="c" style="left:591px;top:440px"><use href="#g14"/></svg>
<b class="p" style="left:407px;top:456px">   </b>
<b class="k" style="left:431px;top:456px">if</b>
<b class="p" style="left:447px;top:456px">(down</b>
<s class="p" style="left:487px;top:456px"></s>
<b class="p" style="left:495px;top:456px">cnt==</b>
<b class="n" style="left:535px;top:456px">8&#x27;d1</b>
<b class="p" style="left:567px;top:456px">)</b>
<b class="p" style="left:407px;top:472px">      down</b>
<s class="p" style="left:487px;top:472px"></s>
<b class="p" style="left:495px;top:472px">cnt&lt;=</b>
<b class="n" style="left:535px;top:472px">8&#x27;d30</b>
<b class="p" style="left:575px;top:472px">;</b>
<b class="c" style="left:583px;top:472px">//</b>
<svg class="c" style="left:599px;top:472px"><use href="#g4"/></svg>
<svg class="c" style="left:613px;top:472px"><use href="#g25"/></svg>
<svg class="c" style="left:627px;top:472px"><use href="#g11"/></svg>
<b class="c" style="left:641px;top:472px">1~30</b>
<svg class="c" style="left:673px;top:472px"><use href="#g8"/></svg>
<svg class="c" style="left:687px;top:472px"><use href="#g19"/></svg>
<b class="p" style="left:407px;top:488px">   </b>
<b class="k" style="left:431px;top:488px">else</b>
<b class="p" style="left:407px;top:504px">      down</b>
<s class="p" style="left:487px;top:504px"></s>
<b class="p" style="left:495px;top:504px">cnt&lt;=down</b>
<s class="p" style="left:567px;top:504px"></s>
<b class="p" style="left:575px;top:504px">cnt-</b>
<b class="n" style="left:607px;top:504px">8&#x27;d1</b>
<b class="p" style="left:639px;top:504px">;</b>
<b class="c" style="left:647px;top:504px">//</b>
<svg class="c" style="left:663px;top:504px"><use href="#g4"/></svg>
<svg class="c" style="left:677px;top:504px"><use href="#g25"/></svg>
<svg class="c" style="left:691px;top:504px"><use href="#g11"/></svg>
<b class="k" style="left:407px;top:536px">assign</b>
<b class="p" style="left:455px;top:536px"> time</b>
<s class="p" style="left:495px;top:536px"></s>
<b class="p" style="left:503px;top:536px">cnt=down</b>
<s class="p" style="left:567px;top:536px"></s>
<b class="p" style="left:575px;top:536px">cnt;</b>
<b class="c" style="left:607px;top:536px">//</b>
<svg class="c" style="left:623px;top:536px"><use href="#g4"/></svg>
<svg class="c" style="left:637px;top:536px"><use href="#g25"/></svg>
<svg class="c" style="left:651px;top:536px"><use href="#g11"/></svg>
<b class="k" style="left:407px;top:568px">always</b>
<b class="p" style="left:455px;top:568px">@(</b>
<b class="k" style="left:471px;top:568px">posedge</b>
<b class="p" style="left:527px;top:568px"> clk)</b>
<b class="p" style="left:407px;top:584px">   </b>
<b class="k" style="left:431px;top:584px">case</b>
<b class="p" style="left:463px;top:584px">(state)</b>
<b class="p" style="left:407px;top:600px">      s</b>
<s class="p" style="left:463px;top:600px"></s>
<b class="p" style="left:471px;top:600px">green:</b>
<b class="c" style="left:519px;top:600px">//</b>
<svg class="c" style="left:535px;top:600px"><use href="#g23"/></svg>
<svg class="c" style="left:549px;top:600px"><use href="#g16"/></svg>
<svg class="c" style="left:563px;top:600px"><use href="#g4"/></svg>
<svg class="c" style="left:577px;top:600px"><use href="#g25"/></svg>
<svg class="c" style="left:591px;top:600px"><use href="#g11"/></svg></div>
</div></body></html>
